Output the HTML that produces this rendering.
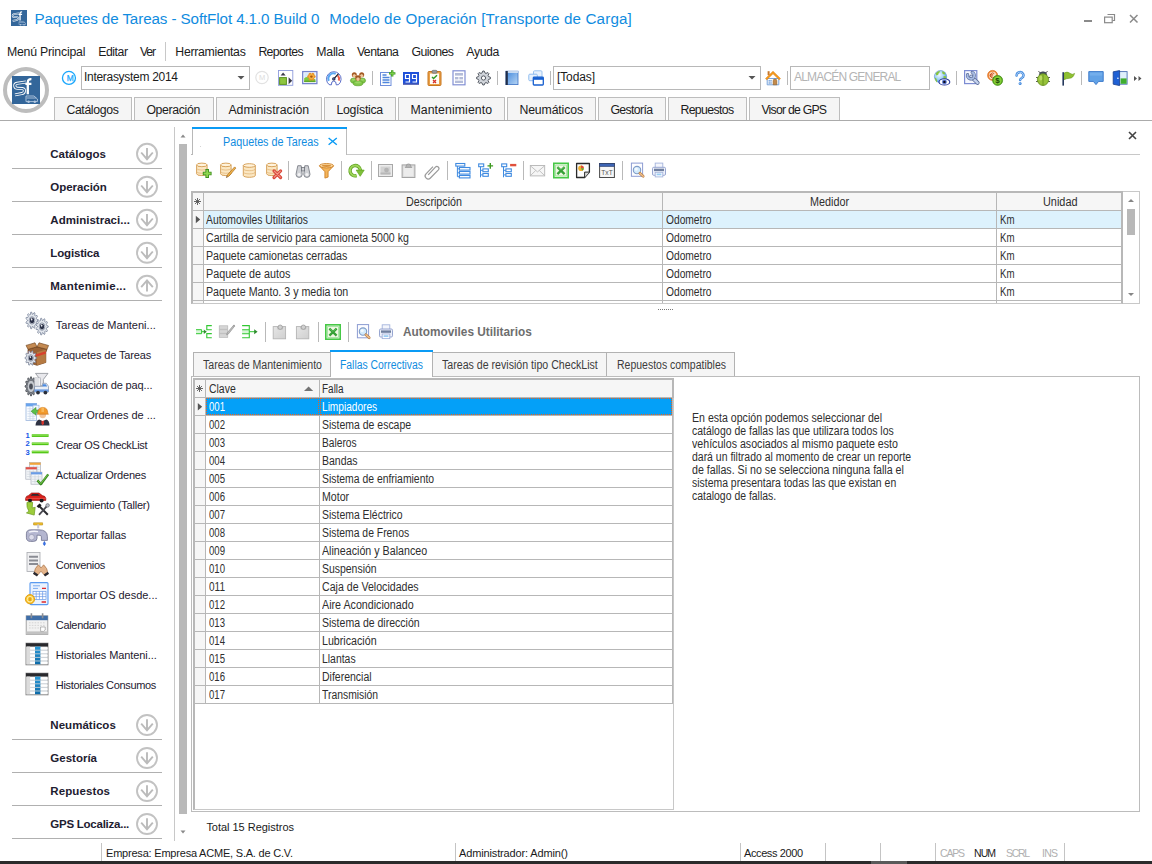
<!DOCTYPE html>
<html><head><meta charset="utf-8"><title>Paquetes de Tareas</title>
<style>
html,body{margin:0;padding:0;}
body{width:1152px;height:864px;position:relative;overflow:hidden;background:#fff;font-family:"Liberation Sans",sans-serif;}
.t{position:absolute;white-space:nowrap;}
.b{position:absolute;box-sizing:border-box;}
svg.b{overflow:visible;}
</style></head><body>
<svg class="b" style="left:11px;top:10px" width="16" height="16" viewBox="0 0 28 28"><rect width="28" height="28" fill="#33669a"/><path d="M14 6L5 7.3Q2.4 7.8 2.8 10.2Q3.1 12.2 5.6 12.3L10.4 12.6Q12.7 13 12.4 15.2Q12.1 17.2 9.8 17.6L3 18.9" fill="none" stroke="#fff" stroke-width="3" stroke-linejoin="round"/><path d="M14 6L5 7.3Q2.4 7.8 2.8 10.2Q3.1 12.2 5.6 12.3L10.4 12.6Q12.7 13 12.4 15.2Q12.1 17.2 9.8 17.6L3 18.9" fill="none" stroke="#33669a" stroke-width="1.3" stroke-linejoin="round"/><path d="M15.8 18.2V6.2Q15.8 3 19.4 3.2M13.4 7.8h6" fill="none" stroke="#fff" stroke-width="2.3"/><g stroke="#b4c8e0" stroke-width="0.9" fill="none"><path d="M14 20h8l3.4 3v2.6H14z"/><path d="M14.6 22h9.6"/></g><circle cx="16.6" cy="25.8" r="1.2" fill="#b4c8e0"/><circle cx="22.8" cy="25.8" r="1.2" fill="#b4c8e0"/></svg>
<div class="t" style="left:34.40px;top:8.23px;font-size:15.20px;line-height:21px;color:#118ce0;letter-spacing:-0.104px;">Paquetes de Tareas - SoftFlot 4.1.0 Build 0</div>
<div class="t" style="left:329.20px;top:8.23px;font-size:15.20px;line-height:21px;color:#118ce0;letter-spacing:0.128px;">Modelo de Operación [Transporte de Carga]</div>
<div class="b" style="left:1084.00px;top:20.00px;width:8.00px;height:2.00px;background:#8a8a8a"></div>
<svg class="b" style="left:1104px;top:14px" width="12" height="10" viewBox="0 0 12 10"><path d="M3.5 0.5h7v6h-2" fill="none" stroke="#8a8a8a" stroke-width="1.2"/><rect x="0.6" y="3.1" width="7.6" height="5.6" fill="#fff" stroke="#8a8a8a" stroke-width="1.2"/></svg>
<svg class="b" style="left:1129px;top:14px" width="10" height="10" viewBox="0 0 10 10"><path d="M1 1L8.5 8.5M8.5 1L1 8.5" stroke="#8a8a8a" stroke-width="1.5" fill="none"/></svg>
<div class="t" style="left:6.90px;top:44.14px;font-size:12.30px;line-height:17px;color:#1c1c1c;letter-spacing:-0.220px;">Menú Principal</div>
<div class="t" style="left:98.30px;top:44.14px;font-size:12.30px;line-height:17px;color:#1c1c1c;letter-spacing:-0.487px;">Editar</div>
<div class="t" style="left:140.00px;top:44.14px;font-size:12.30px;line-height:17px;color:#1c1c1c;letter-spacing:-1.232px;">Ver</div>
<div class="t" style="left:175.30px;top:44.14px;font-size:12.30px;line-height:17px;color:#1c1c1c;letter-spacing:-0.302px;">Herramientas</div>
<div class="t" style="left:258.40px;top:44.14px;font-size:12.30px;line-height:17px;color:#1c1c1c;letter-spacing:-0.673px;">Reportes</div>
<div class="t" style="left:316.30px;top:44.14px;font-size:12.30px;line-height:17px;color:#1c1c1c;letter-spacing:-0.249px;">Malla</div>
<div class="t" style="left:356.90px;top:44.14px;font-size:12.30px;line-height:17px;color:#1c1c1c;letter-spacing:-0.541px;">Ventana</div>
<div class="t" style="left:411.60px;top:44.14px;font-size:12.30px;line-height:17px;color:#1c1c1c;letter-spacing:-0.602px;">Guiones</div>
<div class="t" style="left:466.30px;top:44.14px;font-size:12.30px;line-height:17px;color:#1c1c1c;letter-spacing:-0.389px;">Ayuda</div>
<div class="b" style="left:165.00px;top:42.00px;width:1.00px;height:19.00px;background:#c8c8c8"></div>
<div class="b" style="left:3.00px;top:67.00px;width:46.00px;height:46.00px;border-radius:50%;border:4px solid #bdbdbd;background:#fff"></div>
<svg class="b" style="left:12px;top:76px" width="28" height="28" viewBox="0 0 28 28"><rect width="28" height="28" fill="#33669a"/><path d="M14 6L5 7.3Q2.4 7.8 2.8 10.2Q3.1 12.2 5.6 12.3L10.4 12.6Q12.7 13 12.4 15.2Q12.1 17.2 9.8 17.6L3 18.9" fill="none" stroke="#fff" stroke-width="3" stroke-linejoin="round"/><path d="M14 6L5 7.3Q2.4 7.8 2.8 10.2Q3.1 12.2 5.6 12.3L10.4 12.6Q12.7 13 12.4 15.2Q12.1 17.2 9.8 17.6L3 18.9" fill="none" stroke="#33669a" stroke-width="1.3" stroke-linejoin="round"/><path d="M15.8 18.2V6.2Q15.8 3 19.4 3.2M13.4 7.8h6" fill="none" stroke="#fff" stroke-width="2.3"/><g stroke="#b4c8e0" stroke-width="0.9" fill="none"><path d="M14 20h8l3.4 3v2.6H14z"/><path d="M14.6 22h9.6"/></g><circle cx="16.6" cy="25.8" r="1.2" fill="#b4c8e0"/><circle cx="22.8" cy="25.8" r="1.2" fill="#b4c8e0"/></svg>
<svg class="b" style="left:61px;top:70px" width="16" height="16" viewBox="-0.45 -0.45 16 16"><circle cx="7.5" cy="7.5" r="6.5" fill="#fff" stroke="#1aa6fc" stroke-width="1.3"/><text x="8.7" y="10.5" font-size="8.4" text-anchor="middle" fill="#1aa6fc" stroke="#1aa6fc" stroke-width="0.25" font-family="Liberation Sans">M</text></svg>
<div class="b" style="left:81.00px;top:66.00px;width:169.00px;height:24.00px;border:1px solid #b8b8b8;background:#fff"></div>
<div class="t" style="left:84.00px;top:69.34px;font-size:12.00px;line-height:17px;color:#1c1c1c;letter-spacing:-0.295px;">Interasystem 2014</div>
<svg class="b" style="left:237px;top:76px" width="8" height="4" viewBox="-0.5 0 8 4"><path d="M0 0h7l-3.5 3.6z" fill="#555"/></svg>
<svg class="b" style="left:255px;top:70px" width="14" height="15" viewBox="0 -0.5 14 15"><circle cx="7" cy="7" r="6.2" fill="#fff" stroke="#e2e2e2" stroke-width="1.2"/><text x="7" y="9.8" font-size="7.5" text-anchor="middle" fill="#dcdcdc" font-family="Liberation Sans">M</text></svg>
<div class="b" style="left:372.00px;top:71.00px;width:1.00px;height:14.00px;background:#b9b9b9"></div>
<div class="b" style="left:497.00px;top:71.00px;width:1.00px;height:14.00px;background:#b9b9b9"></div>
<div class="b" style="left:550.00px;top:71.00px;width:1.00px;height:14.00px;background:#b9b9b9"></div>
<div class="b" style="left:787.00px;top:71.00px;width:1.00px;height:14.00px;background:#b9b9b9"></div>
<div class="b" style="left:956.00px;top:71.00px;width:1.00px;height:14.00px;background:#b9b9b9"></div>
<div class="b" style="left:1081.00px;top:71.00px;width:1.00px;height:14.00px;background:#b9b9b9"></div>
<svg class="b" style="left:278px;top:70px" width="16" height="16" viewBox="0 0 16 16"><rect x="0.5" y="0.5" width="14.3" height="14.8" fill="#fff" stroke="#8f9cdc" stroke-width="0.9"/><rect x="1.6" y="7.6" width="6.8" height="6.8" fill="#8dc63f" stroke="#5c9322"/><path d="M2.6 5.6h5L5.1 2.6z" fill="#3a3a4a"/><path d="M10.6 7.2v7l3.6-3.5z" fill="#3a3a4a"/></svg>
<svg class="b" style="left:302px;top:70px" width="16" height="16" viewBox="0 0 16 16"><rect x="0.7" y="1.6" width="14.2" height="12" fill="#fff" stroke="#7684cc" stroke-width="1.3"/><rect x="2.2" y="3.1" width="11.2" height="9" fill="#d6ebfa"/><path d="M2.2 8.2q2.6-2 5-0.6l6.2 1.6v2.9H2.2z" fill="#80ca3c"/><rect x="2.2" y="10.6" width="11.2" height="1.5" fill="#5fa82a"/><circle cx="12.10" cy="6.60" r="1.5" fill="#e8922a"/><circle cx="10.75" cy="8.94" r="1.5" fill="#e8922a"/><circle cx="8.05" cy="8.94" r="1.5" fill="#e8922a"/><circle cx="6.70" cy="6.60" r="1.5" fill="#e8922a"/><circle cx="8.05" cy="4.26" r="1.5" fill="#e8922a"/><circle cx="10.75" cy="4.26" r="1.5" fill="#e8922a"/><circle cx="9.4" cy="6.6" r="2.6" fill="#f4b040"/><circle cx="9.4" cy="6.6" r="1.2" fill="#a8560e"/></svg>
<svg class="b" style="left:326px;top:70px" width="16" height="16" viewBox="0 0 16 16"><path d="M3.1 14.6A7.3 7.3 0 1 1 12.5 14.6L10.3 14.9A2.5 3.9 0 0 0 5.3 14.9Z" fill="#fff" stroke="#4a5ec2" stroke-width="0.9" stroke-linejoin="round"/><path d="M2.8 10.8A5.2 5.2 0 0 1 9.7 3.9" fill="none" stroke="#5aa8f2" stroke-width="2"/><path d="M11.9 5.6A5.2 5.2 0 0 1 12.8 10.6" fill="none" stroke="#f05a48" stroke-width="2"/><path d="M7.8 8.8L12.4 3.8" stroke="#14141e" stroke-width="1.2"/><circle cx="7.8" cy="8.9" r="1.7" fill="#1c2850"/><circle cx="7.8" cy="8.9" r="0.6" fill="#8a9ad0"/></svg>
<svg class="b" style="left:350px;top:70px" width="16" height="16" viewBox="0 0 16 16"><ellipse cx="4" cy="10.6" rx="3.6" ry="2.7" fill="#80c648" stroke="#5a9c2c" stroke-width="0.6"/><ellipse cx="4" cy="9.79" rx="2.16" ry="1.08" fill="#a6dc72" opacity="0.7"/><ellipse cx="12" cy="10.6" rx="3.6" ry="2.7" fill="#80c648" stroke="#5a9c2c" stroke-width="0.6"/><ellipse cx="12" cy="9.79" rx="2.16" ry="1.08" fill="#a6dc72" opacity="0.7"/><circle cx="4.3" cy="4.8" r="2.5" fill="#a85a22"/><ellipse cx="4.3" cy="5.6" rx="1.55" ry="1.8" fill="#f2c79a"/><path d="M2.75 4.55q1.55 -1.5 3.1 0" fill="none" stroke="#7a3c10" stroke-width="0.5"/><circle cx="11.7" cy="4.8" r="2.5" fill="#a85a22"/><ellipse cx="11.7" cy="5.6" rx="1.55" ry="1.8" fill="#f2c79a"/><path d="M10.15 4.55q1.55 -1.5 3.1 0" fill="none" stroke="#7a3c10" stroke-width="0.5"/><ellipse cx="8" cy="13.2" rx="5" ry="2.6" fill="#80c648" stroke="#5a9c2c" stroke-width="0.6"/><ellipse cx="8" cy="12.42" rx="3" ry="1.04" fill="#a6dc72" opacity="0.7"/><circle cx="8" cy="8" r="2.8" fill="#a85a22"/><ellipse cx="8" cy="8.896" rx="1.736" ry="2.016" fill="#f2c79a"/><path d="M6.264 7.72q1.736 -1.68 3.472 0" fill="none" stroke="#7a3c10" stroke-width="0.5"/></svg>
<svg class="b" style="left:380px;top:70px" width="16" height="16" viewBox="0 0 16 16"><rect x="0.5" y="2.5" width="10.5" height="13" fill="#fff" stroke="#6f8fdc"/><path d="M2.5 5h4M2.5 7.5h7M2.5 10h7M2.5 12.5h7" stroke="#4f86dc" stroke-width="1.4"/><path d="M12.2 0.2v6.4M9 3.4h6.4" stroke="#3f9a22" stroke-width="2.4"/><path d="M12.2 0.9v5M9.7 3.4h5" stroke="#7fd04a" stroke-width="1"/></svg>
<svg class="b" style="left:403px;top:70px" width="16" height="16" viewBox="0 0 16 16"><rect x="0" y="2" width="16" height="12.6" fill="#1f50d9"/><rect x="0" y="13.6" width="16" height="1" fill="#5a5a9a"/><path d="M2.5 4.5h4v4h-4zM6.5 8.5v3.5h-4M9.5 4.5h4v4h-4zM13.5 8.5v3.5h-4" fill="none" stroke="#fff" stroke-width="1.2"/></svg>
<svg class="b" style="left:427px;top:70px" width="16" height="16" viewBox="0 0 16 16"><rect x="1" y="1.5" width="13" height="14" rx="1" fill="#e9a048" stroke="#c8761e"/><rect x="3" y="3.5" width="9" height="10.5" fill="#fffdf6"/><rect x="5" y="0.3" width="5" height="3" rx="1" fill="#9a9a9a" stroke="#666" stroke-width="0.6"/><path d="M5 7l1.6 1.6L10 5.2" stroke="#2f9a22" stroke-width="1.4" fill="none"/><path d="M6 10l3 3M9 10l-3 3" stroke="#d8332a" stroke-width="1.3"/></svg>
<svg class="b" style="left:451px;top:70px" width="16" height="16" viewBox="0 0 16 16"><rect x="2" y="0.8" width="12" height="14" fill="#fff" stroke="#8290d4" stroke-width="1.2"/><rect x="4" y="3" width="8" height="2.6" fill="#b4bcd8"/><rect x="4" y="7" width="3.4" height="2.4" fill="#b4bcd8"/><rect x="8.4" y="7" width="3.6" height="2.4" fill="#b4bcd8"/><rect x="4" y="10.6" width="8" height="2.4" fill="#b4bcd8"/></svg>
<svg class="b" style="left:475px;top:70px" width="17" height="16" viewBox="-0.5 0 17 16"><path d="M14.97 7.31L14.97 8.69L12.98 9.51L12.59 10.45L13.41 12.44L12.44 13.41L10.45 12.59L9.51 12.98L8.69 14.97L7.31 14.97L6.49 12.98L5.55 12.59L3.56 13.41L2.59 12.44L3.41 10.45L3.02 9.51L1.03 8.69L1.03 7.31L3.02 6.49L3.41 5.55L2.59 3.56L3.56 2.59L5.55 3.41L6.49 3.02L7.31 1.03L8.69 1.03L9.51 3.02L10.45 3.41L12.44 2.59L13.41 3.56L12.59 5.55L12.98 6.49Z" fill="#d0d4da" stroke="#565b64" stroke-width="1" stroke-linejoin="round"/><circle cx="8" cy="8" r="2.1" fill="#fff" stroke="#565b64" stroke-width="1"/></svg>
<svg class="b" style="left:504px;top:70px" width="16" height="16" viewBox="0 0 16 16"><defs><linearGradient id="bk" x1="0" y1="0" x2="1" y2="1"><stop offset="0" stop-color="#3f86dc"/><stop offset="1" stop-color="#b9d6f4"/></linearGradient></defs><rect x="2" y="1.2" width="12" height="13.4" fill="url(#bk)" stroke="#3a70c4" stroke-width="0.8"/><rect x="2" y="1.2" width="12" height="1.6" fill="#dfe9f6"/><rect x="1.6" y="1" width="2.2" height="14" fill="#1f2c48"/></svg>
<svg class="b" style="left:528px;top:70px" width="16" height="16" viewBox="0 0 16 16"><rect x="5.5" y="0.8" width="8.5" height="6.5" rx="1" fill="#e8f2fd" stroke="#9cc4f0"/><rect x="0.8" y="4.2" width="8.5" height="6.5" rx="1" fill="#e8f2fd" stroke="#8fbcf0"/><rect x="5.3" y="7.2" width="10" height="7.8" rx="0.8" fill="#fff" stroke="#1860d0" stroke-width="1.3"/><rect x="5.3" y="7.2" width="10" height="2.6" fill="#1860d0"/></svg>
<svg class="b" style="left:765px;top:70px" width="16" height="16" viewBox="0 0 16 16"><rect x="2.6" y="1.2" width="2" height="4" fill="#c8782a"/><path d="M2.2 8.5h11.6v6.3H2.2z" fill="#fdfdfd" stroke="#6a9ad8" stroke-width="0.9"/><path d="M0.5 8.6L8 1.2l7.5 7.4-1.3 1.2L8 3.8 1.8 9.8z" fill="#f59a1e" stroke="#d87808" stroke-width="0.5"/><path d="M8.2 14.8v-4a1.8 1.8 0 0 1 3.6 0v4z" fill="#c48a4a" stroke="#8a5a22" stroke-width="0.6"/><rect x="3.6" y="10" width="1.2" height="1.6" fill="#6a9ad8"/><rect x="5.4" y="10" width="1.2" height="1.6" fill="#6a9ad8"/><rect x="3.6" y="12.2" width="1.2" height="1.6" fill="#6a9ad8"/><rect x="5.4" y="12.2" width="1.2" height="1.6" fill="#6a9ad8"/></svg>
<svg class="b" style="left:934px;top:70px" width="16" height="16" viewBox="0 0 16 16"><defs><radialGradient id="gl" cx="0.4" cy="0.35" r="0.7"><stop offset="0" stop-color="#f2faff"/><stop offset="0.55" stop-color="#9fd0f6"/><stop offset="1" stop-color="#3f8fe0"/></radialGradient></defs><circle cx="6.5" cy="6.6" r="6.1" fill="url(#gl)" stroke="#5a8ac8" stroke-width="0.6"/><path d="M1.6 3.4q1.4-1.8 3.4-2.4l1.4 0.8-1.6 1.2-0.6 1.8-1.8 0.8zM8 1.2l2.6 1 0.8 2-1.6 0.4-1.4-1.2zM0.8 7.6l1.4 0.6 1 2.6-0.6 1.6q-1.6-1.6-1.8-4.8zM9.6 6l2.4 0.2 0.4 2-1.6 1.6-1.4-1.6z" fill="#86c440"/><ellipse cx="10.4" cy="11.9" rx="5.4" ry="3.1" fill="#fff" stroke="#2a3a9c" stroke-width="1.1"/><circle cx="10.4" cy="11.9" r="2.4" fill="#5a78d0"/><circle cx="10.4" cy="11.9" r="1.2" fill="#08081c"/></svg>
<svg class="b" style="left:964px;top:70px" width="16" height="16" viewBox="0 0 16 16"><rect x="0.6" y="0.6" width="12.2" height="13" fill="#f6f8ff" stroke="#7c8cd2" stroke-width="1.2"/><path d="M7.2 6.6l6.4 6.2" stroke="#5a6c98" stroke-width="4" stroke-linecap="round"/><path d="M7.2 6.6l6.4 6.2" stroke="#c4d2ee" stroke-width="2.4" stroke-linecap="round"/><path d="M8.2 2.4a3.4 3.4 0 1 1-4.6 2.2" fill="none" stroke="#5a6c98" stroke-width="3.2" stroke-linecap="round"/><path d="M8.2 2.4a3.4 3.4 0 1 1-4.6 2.2" fill="none" stroke="#a8bce4" stroke-width="1.8" stroke-linecap="round"/></svg>
<svg class="b" style="left:987px;top:70px" width="16" height="16" viewBox="0 0 16 16"><circle cx="5.6" cy="5.4" r="5" fill="#f08a3c" stroke="#d86a1c" stroke-width="0.7"/><circle cx="5.6" cy="5.4" r="3.6" fill="#fde2c4"/><path d="M7.2 3.6a2.4 2.4 0 1 0 0 3.6M2.8 4.8h3.4M2.8 6h3" fill="none" stroke="#c8481a" stroke-width="0.9"/><circle cx="10.6" cy="10.4" r="5" fill="#5aa81e" stroke="#3f8a12" stroke-width="0.7"/><circle cx="10.6" cy="10.4" r="3.9" fill="#86d038"/><text x="10.6" y="13.3" font-size="8" font-weight="bold" text-anchor="middle" fill="#1c4808" font-family="Liberation Sans">$</text></svg>
<svg class="b" style="left:1012px;top:70px" width="16" height="16" viewBox="0 0 16 16"><path d="M4.6 5.4a3.4 3.2 0 1 1 5.2 2.6q-1.7 1-1.7 1.9" fill="none" stroke="#3f86dc" stroke-width="2.5" stroke-linecap="round"/><path d="M4.6 5.4a3.4 3.2 0 1 1 5.2 2.6q-1.7 1-1.7 1.9" fill="none" stroke="#bcdcfa" stroke-width="0.9" stroke-linecap="round"/><circle cx="8.1" cy="13.5" r="1.5" fill="#3f86dc"/><circle cx="7.9" cy="13.2" r="0.6" fill="#cfe6fb"/></svg>
<svg class="b" style="left:1035px;top:70px" width="16" height="16" viewBox="0 0 16 16"><path d="M3.4 1l2.2 2.4M12.6 1l-2.2 2.4M1 7.5h2M15 7.5h-2M1 11.5h2M15 11.5h-2" stroke="#333" stroke-width="0.8"/><ellipse cx="8" cy="4.6" rx="3.6" ry="2.8" fill="#4a5466" stroke="#2a303c" stroke-width="0.6"/><ellipse cx="8" cy="9.6" rx="5.6" ry="5.9" fill="#97c23a" stroke="#5f8a1a" stroke-width="0.8"/><path d="M8 4.4v11" stroke="#5f8a1a" stroke-width="0.8"/><ellipse cx="5.8" cy="8" rx="1.5" ry="2.6" fill="#c4e070" opacity="0.8"/></svg>
<svg class="b" style="left:1060px;top:70px" width="16" height="16" viewBox="0 0 16 16"><path d="M3.8 3.2q3.4-2.2 6 0t4.8 0.2q-1.4 4.6-4.8 4.8t-6 1.6z" fill="#8fc032" stroke="#6a9a1c" stroke-width="0.6"/><rect x="2.4" y="2.2" width="1.6" height="13.4" fill="#24385c"/></svg>
<svg class="b" style="left:1088px;top:70px" width="16" height="16" viewBox="0 0 16 16"><path d="M0.8 1.6h14.4v9.8H10.6L8 14.6 5.4 11.4H0.8z" fill="#62a2e6" stroke="#3f7ccc" stroke-width="1"/><path d="M1.8 2.6h12.4v3H1.8z" fill="#7ab4ee" opacity="0.7"/></svg>
<svg class="b" style="left:1112px;top:70px" width="16" height="16" viewBox="0 0 16 16"><rect x="5.5" y="1.6" width="9.6" height="12.6" fill="#dff0fb" stroke="#4a70b4" stroke-width="0.9"/><rect x="8.6" y="8.4" width="6" height="5.4" fill="#3fae2e"/><path d="M1.2 1.8L7.6 0.6v15L1.2 14.2z" fill="#1f60d4" stroke="#183c8c" stroke-width="0.8"/><circle cx="5.9" cy="8.2" r="0.8" fill="#fff"/></svg>
<div class="b" style="left:553.00px;top:66.00px;width:208.00px;height:24.00px;border:1px solid #b8b8b8;background:#fff"></div>
<div class="t" style="left:557.00px;top:69.34px;font-size:12.00px;line-height:17px;color:#1c1c1c;letter-spacing:-0.115px;">[Todas]</div>
<svg class="b" style="left:748px;top:76px" width="8" height="4" viewBox="-0.5 0 8 4"><path d="M0 0h7l-3.5 3.6z" fill="#555"/></svg>
<div class="b" style="left:790.00px;top:66.00px;width:140.00px;height:24.00px;border:1px solid #b8b8b8;background:#fff"></div>
<div class="t" style="left:794.00px;top:69.34px;font-size:12.00px;line-height:17px;color:#b4b4b4;letter-spacing:-0.815px;">ALMACÉN GENERAL</div>
<svg class="b" style="left:1134px;top:76px" width="8" height="5" viewBox="0 0 8 5"><path d="M0 0l3 2.5l-3 2.5zM4.5 0l3 2.5l-3 2.5z" fill="#555"/></svg>
<div class="b" style="left:0.00px;top:120.00px;width:1152.00px;height:1.00px;background:#ababab"></div>
<div class="b" style="left:54.00px;top:97.00px;width:78.00px;height:24.00px;background:#f5f5f5;border:1px solid #bdbdbd;border-bottom:none"></div>
<div class="t" style="left:66.40px;top:101.94px;font-size:12.30px;line-height:17px;color:#1c1c1c;letter-spacing:-0.373px;">Catálogos</div>
<div class="b" style="left:134.00px;top:97.00px;width:80.00px;height:24.00px;background:#f5f5f5;border:1px solid #bdbdbd;border-bottom:none"></div>
<div class="t" style="left:146.40px;top:101.94px;font-size:12.30px;line-height:17px;color:#1c1c1c;letter-spacing:-0.356px;">Operación</div>
<div class="b" style="left:216.00px;top:97.00px;width:106.00px;height:24.00px;background:#f5f5f5;border:1px solid #bdbdbd;border-bottom:none"></div>
<div class="t" style="left:228.40px;top:101.94px;font-size:12.30px;line-height:17px;color:#1c1c1c;letter-spacing:0.002px;">Administración</div>
<div class="b" style="left:324.00px;top:97.00px;width:72.00px;height:24.00px;background:#f5f5f5;border:1px solid #bdbdbd;border-bottom:none"></div>
<div class="t" style="left:336.40px;top:101.94px;font-size:12.30px;line-height:17px;color:#1c1c1c;letter-spacing:-0.316px;">Logística</div>
<div class="b" style="left:398.00px;top:97.00px;width:107.00px;height:24.00px;background:#f5f5f5;border:1px solid #bdbdbd;border-bottom:none"></div>
<div class="t" style="left:410.40px;top:101.94px;font-size:12.30px;line-height:17px;color:#1c1c1c;letter-spacing:0.085px;">Mantenimiento</div>
<div class="b" style="left:507.00px;top:97.00px;width:89.00px;height:24.00px;background:#f5f5f5;border:1px solid #bdbdbd;border-bottom:none"></div>
<div class="t" style="left:519.40px;top:101.94px;font-size:12.30px;line-height:17px;color:#1c1c1c;letter-spacing:-0.138px;">Neumáticos</div>
<div class="b" style="left:598.00px;top:97.00px;width:68.00px;height:24.00px;background:#f5f5f5;border:1px solid #bdbdbd;border-bottom:none"></div>
<div class="t" style="left:610.40px;top:101.94px;font-size:12.30px;line-height:17px;color:#1c1c1c;letter-spacing:-0.639px;">Gestoría</div>
<div class="b" style="left:668.00px;top:97.00px;width:79.00px;height:24.00px;background:#f5f5f5;border:1px solid #bdbdbd;border-bottom:none"></div>
<div class="t" style="left:680.40px;top:101.94px;font-size:12.30px;line-height:17px;color:#1c1c1c;letter-spacing:-0.638px;">Repuestos</div>
<div class="b" style="left:749.00px;top:97.00px;width:91.00px;height:24.00px;background:#f5f5f5;border:1px solid #bdbdbd;border-bottom:none"></div>
<div class="t" style="left:761.40px;top:101.94px;font-size:12.30px;line-height:17px;color:#1c1c1c;letter-spacing:-0.781px;">Visor de GPS</div>
<div class="b" style="left:0.00px;top:120.00px;width:1152.00px;height:1.00px;background:#ababab"></div>
<div class="t" style="left:50.30px;top:146.02px;font-size:11.50px;line-height:16px;color:#1e2030;letter-spacing:0.001px;font-weight:bold;">Catálogos</div>
<svg class="b" style="left:136px;top:142px" width="22" height="23" viewBox="0 -0.8 22 23"><circle cx="11" cy="11" r="10" fill="#fff" stroke="#c2c2c2" stroke-width="1.9"/><path d="M11 5.3v10.4M5.2 9.7L11 16.4l5.8-6.7" fill="none" stroke="#bbbbbb" stroke-width="1.9"/></svg>
<div class="b" style="left:12.00px;top:168.00px;width:150.00px;height:1.00px;background:#b0b0b0"></div>
<div class="t" style="left:50.30px;top:179.02px;font-size:11.50px;line-height:16px;color:#1e2030;letter-spacing:-0.047px;font-weight:bold;">Operación</div>
<svg class="b" style="left:136px;top:175px" width="22" height="23" viewBox="0 -0.8 22 23"><circle cx="11" cy="11" r="10" fill="#fff" stroke="#c2c2c2" stroke-width="1.9"/><path d="M11 5.3v10.4M5.2 9.7L11 16.4l5.8-6.7" fill="none" stroke="#bbbbbb" stroke-width="1.9"/></svg>
<div class="b" style="left:12.00px;top:201.00px;width:150.00px;height:1.00px;background:#b0b0b0"></div>
<div class="t" style="left:50.30px;top:212.02px;font-size:11.50px;line-height:16px;color:#1e2030;letter-spacing:0.026px;font-weight:bold;">Administraci...</div>
<svg class="b" style="left:136px;top:208px" width="22" height="23" viewBox="0 -0.8 22 23"><circle cx="11" cy="11" r="10" fill="#fff" stroke="#c2c2c2" stroke-width="1.9"/><path d="M11 5.3v10.4M5.2 9.7L11 16.4l5.8-6.7" fill="none" stroke="#bbbbbb" stroke-width="1.9"/></svg>
<div class="b" style="left:12.00px;top:234.00px;width:150.00px;height:1.00px;background:#b0b0b0"></div>
<div class="t" style="left:50.30px;top:245.02px;font-size:11.50px;line-height:16px;color:#1e2030;letter-spacing:-0.160px;font-weight:bold;">Logistica</div>
<svg class="b" style="left:136px;top:241px" width="22" height="23" viewBox="0 -0.8 22 23"><circle cx="11" cy="11" r="10" fill="#fff" stroke="#c2c2c2" stroke-width="1.9"/><path d="M11 5.3v10.4M5.2 9.7L11 16.4l5.8-6.7" fill="none" stroke="#bbbbbb" stroke-width="1.9"/></svg>
<div class="b" style="left:12.00px;top:267.00px;width:150.00px;height:1.00px;background:#b0b0b0"></div>
<div class="t" style="left:50.30px;top:278.02px;font-size:11.50px;line-height:16px;color:#1e2030;letter-spacing:0.238px;font-weight:bold;">Mantenimie...</div>
<svg class="b" style="left:136px;top:274px" width="22" height="23" viewBox="0 -0.8 22 23"><circle cx="11" cy="11" r="10" fill="#fff" stroke="#c2c2c2" stroke-width="1.9"/><path d="M11 16.7V6.3M5.2 12.3L11 5.6l5.8 6.7" fill="none" stroke="#bbbbbb" stroke-width="1.9"/></svg>
<div class="b" style="left:12.00px;top:300.00px;width:150.00px;height:1.00px;background:#b0b0b0"></div>
<div class="t" style="left:50.30px;top:717.22px;font-size:11.50px;line-height:16px;color:#1e2030;letter-spacing:0.035px;font-weight:bold;">Neumáticos</div>
<svg class="b" style="left:136px;top:714px" width="22" height="22" viewBox="0 0 22 22"><circle cx="11" cy="11" r="10" fill="#fff" stroke="#c2c2c2" stroke-width="1.9"/><path d="M11 5.3v10.4M5.2 9.7L11 16.4l5.8-6.7" fill="none" stroke="#bbbbbb" stroke-width="1.9"/></svg>
<div class="b" style="left:12.00px;top:739.00px;width:150.00px;height:1.00px;background:#b0b0b0"></div>
<div class="t" style="left:50.30px;top:750.22px;font-size:11.50px;line-height:16px;color:#1e2030;letter-spacing:0.006px;font-weight:bold;">Gestoría</div>
<svg class="b" style="left:136px;top:747px" width="22" height="22" viewBox="0 0 22 22"><circle cx="11" cy="11" r="10" fill="#fff" stroke="#c2c2c2" stroke-width="1.9"/><path d="M11 5.3v10.4M5.2 9.7L11 16.4l5.8-6.7" fill="none" stroke="#bbbbbb" stroke-width="1.9"/></svg>
<div class="b" style="left:12.00px;top:772.00px;width:150.00px;height:1.00px;background:#b0b0b0"></div>
<div class="t" style="left:50.30px;top:783.22px;font-size:11.50px;line-height:16px;color:#1e2030;letter-spacing:0.113px;font-weight:bold;">Repuestos</div>
<svg class="b" style="left:136px;top:780px" width="22" height="22" viewBox="0 0 22 22"><circle cx="11" cy="11" r="10" fill="#fff" stroke="#c2c2c2" stroke-width="1.9"/><path d="M11 5.3v10.4M5.2 9.7L11 16.4l5.8-6.7" fill="none" stroke="#bbbbbb" stroke-width="1.9"/></svg>
<div class="b" style="left:12.00px;top:805.00px;width:150.00px;height:1.00px;background:#b0b0b0"></div>
<div class="t" style="left:50.30px;top:816.22px;font-size:11.50px;line-height:16px;color:#1e2030;letter-spacing:-0.246px;font-weight:bold;">GPS Localiza...</div>
<svg class="b" style="left:136px;top:813px" width="22" height="22" viewBox="0 0 22 22"><circle cx="11" cy="11" r="10" fill="#fff" stroke="#c2c2c2" stroke-width="1.9"/><path d="M11 5.3v10.4M5.2 9.7L11 16.4l5.8-6.7" fill="none" stroke="#bbbbbb" stroke-width="1.9"/></svg>
<div class="b" style="left:12.00px;top:838.00px;width:150.00px;height:1.00px;background:#b0b0b0"></div>
<svg class="b" style="left:25px;top:311px" width="24" height="25" viewBox="0 -0.8 24 25"><g transform="translate(7,8.6) scale(0.74,1)"><path d="M8.38 -0.60L8.38 0.60L6.07 1.32L5.82 2.17L7.37 4.03L6.72 5.03L4.40 4.40L3.73 4.98L4.03 7.37L2.94 7.87L1.32 6.07L0.44 6.20L-0.60 8.38L-1.79 8.21L-2.17 5.82L-2.98 5.46L-5.03 6.72L-5.94 5.94L-4.98 3.73L-5.46 2.98L-7.87 2.94L-8.21 1.79L-6.20 0.44L-6.20 -0.44L-8.21 -1.79L-7.87 -2.94L-5.46 -2.98L-4.98 -3.73L-5.94 -5.94L-5.03 -6.72L-2.98 -5.46L-2.17 -5.82L-1.79 -8.21L-0.60 -8.38L0.44 -6.20L1.32 -6.07L2.94 -7.87L4.03 -7.37L3.73 -4.98L4.40 -4.40L6.72 -5.03L7.37 -4.03L5.82 -2.17L6.07 -1.32Z" fill="#e2e6ec" stroke="#6c7890" stroke-width="0.8" stroke-linejoin="round"/><circle cx="0" cy="0" r="3.78" fill="#fff" stroke="#6c7890" stroke-width="0.8"/><circle cx="0" cy="0" r="2.856" fill="#2c3248"/><circle cx="-0.504" cy="-1.008" r="1.092" fill="#eef0f4"/></g><g transform="translate(17,14.8) scale(0.74,1)"><path d="M8.38 -0.60L8.38 0.60L6.07 1.32L5.82 2.17L7.37 4.03L6.72 5.03L4.40 4.40L3.73 4.98L4.03 7.37L2.94 7.87L1.32 6.07L0.44 6.20L-0.60 8.38L-1.79 8.21L-2.17 5.82L-2.98 5.46L-5.03 6.72L-5.94 5.94L-4.98 3.73L-5.46 2.98L-7.87 2.94L-8.21 1.79L-6.20 0.44L-6.20 -0.44L-8.21 -1.79L-7.87 -2.94L-5.46 -2.98L-4.98 -3.73L-5.94 -5.94L-5.03 -6.72L-2.98 -5.46L-2.17 -5.82L-1.79 -8.21L-0.60 -8.38L0.44 -6.20L1.32 -6.07L2.94 -7.87L4.03 -7.37L3.73 -4.98L4.40 -4.40L6.72 -5.03L7.37 -4.03L5.82 -2.17L6.07 -1.32Z" fill="#e2e6ec" stroke="#6c7890" stroke-width="0.8" stroke-linejoin="round"/><circle cx="0" cy="0" r="3.78" fill="#fff" stroke="#6c7890" stroke-width="0.8"/><circle cx="0" cy="0" r="2.856" fill="#2c3248"/><circle cx="-0.504" cy="-1.008" r="1.092" fill="#eef0f4"/></g></svg>
<div class="t" style="left:55.80px;top:317.69px;font-size:11.00px;line-height:15px;color:#1e2030;letter-spacing:0.017px;">Tareas de Manteni...</div>
<svg class="b" style="left:25px;top:341px" width="24" height="25" viewBox="0 -0.8 24 25"><path d="M3 7.5l9-2.5 10 2.5-1.2 3.2v10L12 23.5 3 20.5z" fill="#9a6234" stroke="#6a3e1a" stroke-width="0.7"/><path d="M12 10.5l8.8-2.8v13L12 23.5z" fill="#b57a42"/><path d="M3 7.5L1 3.6l9-2.6 2 4zM22 7.5l1.6-3.8L14 1l-2 4z" fill="#c48a52" stroke="#6a3e1a" stroke-width="0.6"/><path d="M3 9.2l9 3 8.8-2.8v2.6L12 14.8l-9-3z" fill="#d8402c"/><g transform="translate(5.8,16.2) scale(0.78,1)"><path d="M7.38 -0.58L7.38 0.58L5.32 1.28L5.06 2.10L6.31 3.87L5.63 4.81L3.56 4.16L2.86 4.67L2.83 6.84L1.73 7.20L0.43 5.46L-0.43 5.46L-1.73 7.20L-2.83 6.84L-2.86 4.67L-3.56 4.16L-5.63 4.81L-6.31 3.87L-5.06 2.10L-5.32 1.28L-7.38 0.58L-7.38 -0.58L-5.32 -1.28L-5.06 -2.10L-6.31 -3.87L-5.63 -4.81L-3.56 -4.16L-2.86 -4.67L-2.83 -6.84L-1.73 -7.20L-0.43 -5.46L0.43 -5.46L1.73 -7.20L2.83 -6.84L2.86 -4.67L3.56 -4.16L5.63 -4.81L6.31 -3.87L5.06 -2.10L5.32 -1.28Z" fill="#e2e6ec" stroke="#6c7890" stroke-width="0.8" stroke-linejoin="round"/><circle cx="0" cy="0" r="3.33" fill="#fff" stroke="#6c7890" stroke-width="0.8"/><circle cx="0" cy="0" r="2.516" fill="#2c3248"/><circle cx="-0.444" cy="-0.888" r="0.962" fill="#eef0f4"/></g></svg>
<div class="t" style="left:55.80px;top:347.69px;font-size:11.00px;line-height:15px;color:#1e2030;letter-spacing:-0.126px;">Paquetes de Tareas</div>
<svg class="b" style="left:25px;top:371px" width="24" height="25" viewBox="0 -0.8 24 25"><g transform="translate(6,14.6) scale(0.62,1)"><path d="M9.58 -0.63L9.58 0.63L7.26 1.44L7.01 2.38L8.61 4.25L7.98 5.33L5.56 4.88L4.88 5.56L5.33 7.98L4.25 8.61L2.38 7.01L1.44 7.26L0.63 9.58L-0.63 9.58L-1.44 7.26L-2.38 7.01L-4.25 8.61L-5.33 7.98L-4.88 5.56L-5.56 4.88L-7.98 5.33L-8.61 4.25L-7.01 2.38L-7.26 1.44L-9.58 0.63L-9.58 -0.63L-7.26 -1.44L-7.01 -2.38L-8.61 -4.25L-7.98 -5.33L-5.56 -4.88L-4.88 -5.56L-5.33 -7.98L-4.25 -8.61L-2.38 -7.01L-1.44 -7.26L-0.63 -9.58L0.63 -9.58L1.44 -7.26L2.38 -7.01L4.25 -8.61L5.33 -7.98L4.88 -5.56L5.56 -4.88L7.98 -5.33L8.61 -4.25L7.01 -2.38L7.26 -1.44Z" fill="#8a9098" stroke="#2e3238" stroke-width="0.8" stroke-linejoin="round"/><circle cx="0" cy="0" r="3.4" fill="#fff" stroke="#2e3238" stroke-width="0.8"/><circle cx="0" cy="0" r="6.2" fill="#c4c8ce" stroke="#4a4e56" stroke-width="0.8"/><circle cx="0" cy="0" r="3" fill="#4a4e58"/></g><path d="M10.5 1.6h12.5l-4.6 6v6.4h-3.3V7.6z" fill="#e8e8ec" stroke="#8a8e96" stroke-width="0.8"/><path d="M9.5 6h6v9h-6z" fill="#f2f2f4" stroke="#a4a8b0" stroke-width="0.6"/><path d="M11 7v7M13 7v7" stroke="#c0c4ca" stroke-width="0.7"/><path d="M9.5 14.5h8.2v-3h3.6l2.2 3v5.6H9.5z" fill="#e9eef6" stroke="#7a8aa4" stroke-width="0.7"/><path d="M17.7 12.4h3l1.6 2.2h-4.6z" fill="#4a8ae0"/><path d="M9.5 17.6h14v2.5h-14z" fill="#6a9ae0"/><circle cx="13" cy="20.8" r="1.9" fill="#2a2e38"/><circle cx="20.4" cy="20.8" r="1.9" fill="#2a2e38"/></svg>
<div class="t" style="left:55.80px;top:377.69px;font-size:11.00px;line-height:15px;color:#1e2030;letter-spacing:-0.125px;">Asociación de paq...</div>
<svg class="b" style="left:25px;top:401px" width="24" height="25" viewBox="0 -0.8 24 25"><rect x="1" y="1.6" width="10.6" height="17" fill="#fbfdff" stroke="#9ab4dc" stroke-width="0.8"/><rect x="1" y="1.6" width="10.6" height="3" fill="#6aa4ec"/><path d="M2.4 7h8M2.4 9.5h8M2.4 12h8M2.4 14.5h8M2.4 17h8M5 5v13.4M8 5v13.4" stroke="#c4d2e6" stroke-width="0.7"/><rect x="8" y="3.4" width="6" height="8" fill="#eef6ff" stroke="#9ab4dc" stroke-width="0.7"/><path d="M14.6 8.2v2.6H11v2.6l-5-3.9 5-3.9v2.6z" fill="#5cc04a" stroke="#3a8a2a" stroke-width="0.5"/><path d="M10.5 23.6q0.4-5 3.6-6l3.6 1.6 3.6-1.6q3.2 1 3.2 6z" fill="#2e3242"/><path d="M16.6 18l1.1 0.6 1.1-0.6 0.2 4-1.3 1.4-1.3-1.4z" fill="#d8342c"/><path d="M15.2 17.6l2.5 1.6 2.5-1.6-0.6-1.4h-3.8z" fill="#fff"/><ellipse cx="17.7" cy="12.6" rx="3.4" ry="3.8" fill="#f2c49a"/><path d="M12.8 11.6q0-6 5-6t5 6l0.8 0.8H12z" fill="#f29a2c" stroke="#c8701a" stroke-width="0.6"/><path d="M16.4 5.6h2.6v4.6h-2.6z" fill="#f8b85a"/></svg>
<div class="t" style="left:55.80px;top:407.69px;font-size:11.00px;line-height:15px;color:#1e2030;letter-spacing:-0.014px;">Crear Ordenes de ...</div>
<svg class="b" style="left:25px;top:431px" width="24" height="25" viewBox="0 -0.8 24 25"><text x="2.6" y="6.5" font-size="7.6" font-weight="bold" text-anchor="middle" fill="#1458e6" font-family="Liberation Sans">1</text><path d="M6.8 3.8H23.6" stroke="#4fc414" stroke-width="2.7"/><path d="M6.8 3.4H23.6" stroke="#a4ec6a" stroke-width="0.8"/><text x="2.6" y="14.7" font-size="7.6" font-weight="bold" text-anchor="middle" fill="#1458e6" font-family="Liberation Sans">2</text><path d="M6.8 12H23.6" stroke="#4fc414" stroke-width="2.7"/><path d="M6.8 11.6H23.6" stroke="#a4ec6a" stroke-width="0.8"/><text x="2.6" y="22.9" font-size="7.6" font-weight="bold" text-anchor="middle" fill="#1458e6" font-family="Liberation Sans">3</text><path d="M6.8 20.2H23.6" stroke="#4fc414" stroke-width="2.7"/><path d="M6.8 19.8H23.6" stroke="#a4ec6a" stroke-width="0.8"/></svg>
<div class="t" style="left:55.80px;top:437.69px;font-size:11.00px;line-height:15px;color:#1e2030;letter-spacing:-0.359px;">Crear OS CheckList</div>
<svg class="b" style="left:25px;top:461px" width="24" height="25" viewBox="0 -0.8 24 25"><rect x="4.6" y="0.8" width="11" height="12" fill="#f4f6f8" stroke="#aab0ba" stroke-width="0.7"/><rect x="4.6" y="0.8" width="11" height="2.2" fill="#f2a43a"/><path d="M5.6 5.4h9M5.6 7.8h9M5.6 10.2h9M8.6 3.8v8M12 3.8v8" stroke="#c8ced6" stroke-width="0.6"/><rect x="0.8" y="5.4" width="11" height="12" fill="#f4f6f8" stroke="#aab0ba" stroke-width="0.7"/><rect x="0.8" y="5.4" width="11" height="2.2" fill="#e05048"/><path d="M1.8 10h9M1.8 12.4h9M1.8 14.8h9M4.8 8.4v8M8.2 8.4v8" stroke="#c8ced6" stroke-width="0.6"/><rect x="6" y="10.4" width="11" height="12" fill="#f4f6f8" stroke="#aab0ba" stroke-width="0.7"/><rect x="6" y="10.4" width="11" height="2.2" fill="#6a9ce6"/><path d="M7 15h9M7 17.4h9M7 19.8h9M10 13.4v8M13.4 13.4v8" stroke="#c8ced6" stroke-width="0.6"/><path d="M12.4 18.6l3.4 3.8 7.4-9.8" fill="none" stroke="#3a8a22" stroke-width="2.4" stroke-linejoin="round"/><path d="M12.6 18.8l3.2 3 7-9" fill="none" stroke="#7cc84a" stroke-width="0.9"/></svg>
<div class="t" style="left:55.80px;top:467.69px;font-size:11.00px;line-height:15px;color:#1e2030;letter-spacing:-0.179px;">Actualizar Ordenes</div>
<svg class="b" style="left:25px;top:491px" width="24" height="25" viewBox="0 -0.8 24 25"><path d="M0.6 6.4q0.4-2.4 3-2.8l3-2.4h7.4l3.4 2.6q3 0.4 3.4 2.6v2.2H0.6z" fill="#d8201a" stroke="#8a0c0a" stroke-width="0.6"/><path d="M5.4 4l2-1.8h5.4l2.2 1.8z" fill="#2a2a32"/><circle cx="5" cy="8.6" r="2" fill="#1a1a1e"/><circle cx="16.6" cy="8.6" r="2" fill="#1a1a1e"/><path d="M0.6 6.6h20" stroke="#f2605a" stroke-width="0.7"/><path d="M2 10.5h5.6l-0.4 5.6 3-0.6-1 7.8-7.8-2.2 2.6-1.6q-2.8-3.8-2-9z" fill="#9ccc3c" stroke="#6a9a1c" stroke-width="0.7"/><path d="M13.4 13.4l9.4 9.6" stroke="#2a2a2e" stroke-width="2"/><path d="M22.8 13.4L14 23" stroke="#4a4a52" stroke-width="1.8"/><path d="M11.6 14.4l3-2.8 2 1.8-3 2.8z" fill="#1a1a1e"/><circle cx="22.6" cy="13.6" r="1.8" fill="#b8bcc4" stroke="#5a5e66" stroke-width="0.6"/></svg>
<div class="t" style="left:55.80px;top:497.69px;font-size:11.00px;line-height:15px;color:#1e2030;letter-spacing:-0.191px;">Seguimiento (Taller)</div>
<svg class="b" style="left:25px;top:521px" width="24" height="25" viewBox="0 -0.8 24 25"><path d="M8.6 1h9v2.2h-9z" fill="#f2c230" stroke="#b88a12" stroke-width="0.6"/><rect x="12.2" y="2.6" width="2" height="4" fill="#c8c8d8"/><path d="M1.4 12q0-4 4.4-4h8q8.6 0 8.6 7v3.6h-6V15q0-1.6-2.4-1.6H12v3.2q0 3-3.6 3H5.6q-4.2 0-4.2-4z" fill="#b4b6d0" stroke="#70728e" stroke-width="0.8"/><path d="M4 10.4q4-1.6 9-0.6" stroke="#f4f4fa" stroke-width="1.4" fill="none"/><circle cx="6.6" cy="15.4" r="2.8" fill="#dcdcea" stroke="#8a8ca4" stroke-width="0.6"/><path d="M19.4 19.6q2.2 2.6 0 4.2q-2.2-1.6 0-4.2z" fill="#3a7af0" stroke="#1a4ac0" stroke-width="0.5"/></svg>
<div class="t" style="left:55.80px;top:527.69px;font-size:11.00px;line-height:15px;color:#1e2030;letter-spacing:-0.081px;">Reportar fallas</div>
<svg class="b" style="left:25px;top:551px" width="24" height="25" viewBox="0 -0.8 24 25"><rect x="2" y="0.8" width="13" height="19" fill="#f0f0f2" stroke="#a8aab0" stroke-width="0.8"/><path d="M4 5h9M4 8.6h9M4 12.2h9" stroke="#8a8c94" stroke-width="2"/><path d="M9 22.6q0.4-6.6 4.4-9.6l2.6 3.2 2.6-3.2q4 3 4.4 9.6l-3.6 0.8-3.4-4-3.4 4z" fill="#e4b48a" stroke="#a8744a" stroke-width="0.7"/><path d="M8.6 21l4 2.6M23.4 21l-4 2.6" stroke="#2a2a32" stroke-width="2.4"/></svg>
<div class="t" style="left:55.80px;top:557.69px;font-size:11.00px;line-height:15px;color:#1e2030;letter-spacing:-0.310px;">Convenios</div>
<svg class="b" style="left:25px;top:581px" width="24" height="25" viewBox="0 -0.8 24 25"><rect x="5" y="0.8" width="18" height="22" rx="1" fill="#eaf2fe" stroke="#5a9af0" stroke-width="1.1"/><path d="M8 4h7M8 6.6h5" stroke="#7aaaf0" stroke-width="1"/><path d="M17 6.6h4M16.6 20.2h4.4" stroke="#e02a2a" stroke-width="1.3"/><rect x="8" y="9.6" width="13" height="8" fill="#fff" stroke="#6a9ae6" stroke-width="0.7"/><path d="M8 12.2h13M8 14.8h13M11.2 9.6v8M14.4 9.6v8M17.6 9.6v8" stroke="#6a9ae6" stroke-width="0.7"/><circle cx="5" cy="17.4" r="4.6" fill="#f8c430" stroke="#e09a0c" stroke-width="0.9"/><circle cx="5" cy="17.4" r="2.8" fill="none" stroke="#fff0b0" stroke-width="0.9"/><path d="M5 15.8v3.4" stroke="#c88a0a" stroke-width="1"/></svg>
<div class="t" style="left:55.80px;top:587.69px;font-size:11.00px;line-height:15px;color:#1e2030;letter-spacing:-0.021px;">Importar OS desde...</div>
<svg class="b" style="left:25px;top:611px" width="24" height="25" viewBox="0 -0.8 24 25"><rect x="1.2" y="4" width="21.6" height="18.6" fill="#f2f2f2" stroke="#9a9a9a" stroke-width="0.9"/><rect x="1.2" y="4" width="21.6" height="4.4" fill="#3f6ea8"/><rect x="1.2" y="19.6" width="21.6" height="3" fill="#c2c2c2"/><path d="M6.4 1.4v5M17.6 1.4v5" stroke="#8a8e96" stroke-width="1.6"/><path d="M4 11h16M4 13.6h16M4 16.2h16" stroke="#d0d0d0" stroke-width="0.9" stroke-dasharray="1.6 1.2"/><path d="M15.6 15.2h4.6v3l-1.6 1.4h-3z" fill="#fff" stroke="#8a8a8a" stroke-width="0.6"/></svg>
<div class="t" style="left:55.80px;top:617.69px;font-size:11.00px;line-height:15px;color:#1e2030;letter-spacing:-0.311px;">Calendario</div>
<svg class="b" style="left:25px;top:641px" width="24" height="25" viewBox="0 -0.8 24 25"><rect x="1" y="1.4" width="22" height="21.6" fill="#f6f6f6" stroke="#8a8a8a" stroke-width="1"/><rect x="1" y="1.4" width="22" height="3.4" fill="#2a2a2e"/><rect x="1.6" y="4.8" width="3.6" height="17.6" fill="#dcdcdc"/><defs><linearGradient id="tbg" x1="0" y1="0" x2="0" y2="1"><stop offset="0" stop-color="#2a9ad8"/><stop offset="1" stop-color="#0c6aa8"/></linearGradient></defs><rect x="10" y="4.8" width="5.6" height="17.6" fill="url(#tbg)"/><path d="M5.2 8.4h17.4M5.2 12h17.4M5.2 15.6h17.4M5.2 19.2h17.4" stroke="#c4ccd4" stroke-width="0.9"/><path d="M5.2 6.6h4.8M5.2 10.2h4.8M5.2 13.8h4.8M5.2 17.4h4.8M5.2 21h4.8M15.6 6.6h7M15.6 10.2h7M15.6 13.8h7M15.6 17.4h7M15.6 21h7" stroke="#fff" stroke-width="1.8"/></svg>
<div class="t" style="left:55.80px;top:647.69px;font-size:11.00px;line-height:15px;color:#1e2030;letter-spacing:-0.086px;">Historiales Manteni...</div>
<svg class="b" style="left:25px;top:671px" width="24" height="25" viewBox="0 -0.8 24 25"><rect x="1" y="1.4" width="22" height="21.6" fill="#f6f6f6" stroke="#8a8a8a" stroke-width="1"/><rect x="1" y="1.4" width="22" height="3.4" fill="#2a2a2e"/><rect x="1.6" y="4.8" width="3.6" height="17.6" fill="#dcdcdc"/><defs><linearGradient id="tbg2" x1="0" y1="0" x2="0" y2="1"><stop offset="0" stop-color="#2a9ad8"/><stop offset="1" stop-color="#0c6aa8"/></linearGradient></defs><rect x="10" y="4.8" width="5.6" height="17.6" fill="url(#tbg2)"/><path d="M5.2 8.4h17.4M5.2 12h17.4M5.2 15.6h17.4M5.2 19.2h17.4" stroke="#c4ccd4" stroke-width="0.9"/><path d="M5.2 6.6h4.8M5.2 10.2h4.8M5.2 13.8h4.8M5.2 17.4h4.8M5.2 21h4.8M15.6 6.6h7M15.6 10.2h7M15.6 13.8h7M15.6 17.4h7M15.6 21h7" stroke="#fff" stroke-width="1.8"/></svg>
<div class="t" style="left:55.80px;top:677.69px;font-size:11.00px;line-height:15px;color:#1e2030;letter-spacing:-0.341px;">Historiales Consumos</div>
<div class="b" style="left:174.00px;top:127.00px;width:1.00px;height:714.00px;background:#c8c8c8"></div>
<div class="b" style="left:179.10px;top:144.00px;width:7.70px;height:670.00px;background:#b9b9b9"></div>
<svg class="b" style="left:180px;top:134px" width="6" height="4" viewBox="-0.5 -0.5 6 4"><path d="M0 3h5L2.5 0z" fill="#8a8a8a"/></svg>
<svg class="b" style="left:180px;top:830px" width="6" height="4" viewBox="-0.5 -0.5 6 4"><path d="M0 0h5L2.5 3z" fill="#8a8a8a"/></svg>
<div class="t" style="left:106.00px;top:845.69px;font-size:11.00px;line-height:15px;color:#1a1a1a;letter-spacing:-0.206px;">Empresa: Empresa ACME, S.A. de C.V.</div>
<div class="t" style="left:459.00px;top:845.69px;font-size:11.00px;line-height:15px;color:#1a1a1a;letter-spacing:-0.137px;">Administrador: Admin()</div>
<div class="t" style="left:744.00px;top:845.69px;font-size:11.00px;line-height:15px;color:#1a1a1a;letter-spacing:-0.398px;">Access 2000</div>
<div class="t" style="left:940.00px;top:845.86px;font-size:10.50px;line-height:15px;color:#b0b0b0;letter-spacing:-1.198px;">CAPS</div>
<div class="t" style="left:974.00px;top:845.86px;font-size:10.50px;line-height:15px;color:#1a1a1a;letter-spacing:-0.956px;">NUM</div>
<div class="t" style="left:1006.00px;top:845.86px;font-size:10.50px;line-height:15px;color:#b0b0b0;letter-spacing:-1.337px;">SCRL</div>
<div class="t" style="left:1042.00px;top:845.86px;font-size:10.50px;line-height:15px;color:#b0b0b0;letter-spacing:-0.752px;">INS</div>
<div class="b" style="left:100.50px;top:843.00px;width:1.00px;height:18.00px;background:#c4c4c4"></div>
<div class="b" style="left:455.00px;top:843.00px;width:1.00px;height:18.00px;background:#c4c4c4"></div>
<div class="b" style="left:740.00px;top:843.00px;width:1.00px;height:18.00px;background:#c4c4c4"></div>
<div class="b" style="left:825.00px;top:843.00px;width:1.00px;height:18.00px;background:#c4c4c4"></div>
<div class="b" style="left:880.00px;top:843.00px;width:1.00px;height:18.00px;background:#c4c4c4"></div>
<div class="b" style="left:935.00px;top:843.00px;width:1.00px;height:18.00px;background:#c4c4c4"></div>
<div class="b" style="left:1064.00px;top:843.00px;width:1.00px;height:18.00px;background:#c4c4c4"></div>
<div class="b" style="left:0.00px;top:861.40px;width:1152.00px;height:3.00px;background:#2b2b2b"></div>
<div class="b" style="left:871.00px;top:861.40px;width:36.00px;height:3.00px;background:#5a5a5a"></div>
<div class="b" style="left:346.00px;top:154.00px;width:794.00px;height:1.00px;background:#c8c8c8"></div>
<div class="b" style="left:192.00px;top:127.00px;width:155.00px;height:28.00px;background:#fff;border-right:1px solid #bcbcbc;border-left:1px solid #b8b8b8"></div>
<div class="b" style="left:192.00px;top:127.00px;width:155.00px;height:2.00px;background:#0a9bf5"></div>
<div class="b" style="left:191.00px;top:154.00px;width:2.00px;height:1.00px;background:#b8b8b8"></div>
<div class="b" style="left:200.00px;top:146.00px;width:1.00px;height:1.00px;background:#d4d4d4"></div>
<div class="t" style="left:222.60px;top:134.14px;font-size:12.00px;line-height:17px;color:#118ce0;transform:scaleX(0.8974);transform-origin:0 50%;">Paquetes de Tareas</div>
<svg class="b" style="left:328px;top:137px" width="10" height="9" viewBox="0 -0.4 10 9"><path d="M0.6 0.6L8.8 7.4M8.8 0.6L0.6 7.4" stroke="#0a9bf5" stroke-width="1.4"/></svg>
<svg class="b" style="left:1128px;top:131px" width="9" height="9" viewBox="0 0 9 9"><path d="M1 1L8 8M8 1L1 8" stroke="#444" stroke-width="1.6"/></svg>
<div class="b" style="left:288.00px;top:161.00px;width:1.00px;height:19.00px;background:#b9b9b9"></div>
<div class="b" style="left:341.00px;top:161.00px;width:1.00px;height:19.00px;background:#b9b9b9"></div>
<div class="b" style="left:371.00px;top:161.00px;width:1.00px;height:19.00px;background:#b9b9b9"></div>
<div class="b" style="left:447.00px;top:161.00px;width:1.00px;height:19.00px;background:#b9b9b9"></div>
<div class="b" style="left:523.00px;top:161.00px;width:1.00px;height:19.00px;background:#b9b9b9"></div>
<div class="b" style="left:622.00px;top:161.00px;width:1.00px;height:19.00px;background:#b9b9b9"></div>
<svg class="b" style="left:196px;top:162px" width="16" height="17" viewBox="0 -0.5 16 17"><g opacity="1"><path d="M0.6 2.4v8.9a5.25 1.8 0 0 0 10.5 0v-8.9" fill="#fbe7c2" stroke="#d39a4e" stroke-width="0.9"/><path d="M0.6 5.8a5.25 1.8 0 0 0 10.5 0" fill="none" stroke="#e0b070" stroke-width="0.7"/><path d="M0.6 9a5.25 1.8 0 0 0 10.5 0" fill="none" stroke="#e0b070" stroke-width="0.7"/><ellipse cx="5.85" cy="2.4" rx="5.25" ry="1.8" fill="#fff3dc" stroke="#d39a4e" stroke-width="0.9"/></g><path d="M11.2 6.6v8.8M6.8 11h8.8" stroke="#3f8f1f" stroke-width="3.6"/><path d="M11.2 7.5v7M7.7 11h7" stroke="#8fd650" stroke-width="1.8"/></svg>
<svg class="b" style="left:220px;top:162px" width="16" height="17" viewBox="0 -0.5 16 17"><g opacity="1"><path d="M0.6 2.4v8.9a5.25 1.8 0 0 0 10.5 0v-8.9" fill="#fbe7c2" stroke="#d39a4e" stroke-width="0.9"/><path d="M0.6 5.8a5.25 1.8 0 0 0 10.5 0" fill="none" stroke="#e0b070" stroke-width="0.7"/><path d="M0.6 9a5.25 1.8 0 0 0 10.5 0" fill="none" stroke="#e0b070" stroke-width="0.7"/><ellipse cx="5.85" cy="2.4" rx="5.25" ry="1.8" fill="#fff3dc" stroke="#d39a4e" stroke-width="0.9"/></g><path d="M14.6 4.4l1.2 1.2L9 13.6l-2.6 1.4 1.2-2.8z" fill="#f0b44a" stroke="#a86a1a" stroke-width="0.7"/><path d="M6.4 15l1-0.6-0.6-0.6z" fill="#1a3a8a"/></svg>
<svg class="b" style="left:241px;top:162px" width="17" height="17" viewBox="-0.5 -0.5 17 17"><g opacity="1"><path d="M1.8 3v10a6 1.8 0 0 0 12 0v-10" fill="#fbe7c2" stroke="#d39a4e" stroke-width="0.9"/><path d="M1.8 6.4a6 1.8 0 0 0 12 0" fill="none" stroke="#e0b070" stroke-width="0.7"/><path d="M1.8 9.6a6 1.8 0 0 0 12 0" fill="none" stroke="#e0b070" stroke-width="0.7"/><ellipse cx="7.8" cy="3" rx="6" ry="1.8" fill="#fff3dc" stroke="#d39a4e" stroke-width="0.9"/></g></svg>
<svg class="b" style="left:266px;top:162px" width="16" height="17" viewBox="0 -0.5 16 17"><g opacity="1"><path d="M0.6 2.4v8.9a5.25 1.8 0 0 0 10.5 0v-8.9" fill="#fbe7c2" stroke="#d39a4e" stroke-width="0.9"/><path d="M0.6 5.8a5.25 1.8 0 0 0 10.5 0" fill="none" stroke="#e0b070" stroke-width="0.7"/><path d="M0.6 9a5.25 1.8 0 0 0 10.5 0" fill="none" stroke="#e0b070" stroke-width="0.7"/><ellipse cx="5.85" cy="2.4" rx="5.25" ry="1.8" fill="#fff3dc" stroke="#d39a4e" stroke-width="0.9"/></g><path d="M8 8.4l6.6 6.6M14.6 8.4L8 15" stroke="#d9483a" stroke-width="3.2" stroke-linecap="round"/><path d="M8.3 8.7l6 6M14.3 8.7l-6 6" stroke="#f59a8a" stroke-width="1.1" stroke-linecap="round"/></svg>
<svg class="b" style="left:295px;top:162px" width="16" height="17" viewBox="0 -0.5 16 17"><g fill="#d0d2d6" stroke="#70747c" stroke-width="0.8"><path d="M2.8 3.2h3.4l1 8.6a3 3 0 1 1-6.2 0z"/><path d="M9.8 3.2h3.4l1.8 8.6a3 3 0 1 1-6.2 0z"/><rect x="6.4" y="5" width="3.2" height="3.4"/></g><circle cx="4.1" cy="12" r="1.5" fill="#f4f4f6"/><circle cx="11.9" cy="12" r="1.5" fill="#f4f4f6"/></svg>
<svg class="b" style="left:318px;top:162px" width="17" height="17" viewBox="-0.5 -0.5 17 17"><path d="M1 3.4h14L9.6 9.2v5.4l-3.2 1V9.2z" fill="#f3b45a" stroke="#c9781c" stroke-width="0.8" stroke-linejoin="round"/><ellipse cx="8" cy="3.2" rx="7" ry="2.2" fill="#fbd9a0" stroke="#c9781c" stroke-width="0.8"/><ellipse cx="8" cy="3.3" rx="4.6" ry="1.1" fill="#d9913a"/></svg>
<svg class="b" style="left:348px;top:162px" width="16" height="17" viewBox="0 -0.5 16 17"><path d="M8.6 13.2A5.2 5.2 0 1 1 12.4 7.6" fill="none" stroke="#5ea31f" stroke-width="3.4"/><path d="M8.6 13.2A5.2 5.2 0 1 1 12.4 7.6" fill="none" stroke="#9ed45a" stroke-width="1.8"/><path d="M8.2 7.6h8l-4 6.2z" fill="#7fc03a" stroke="#5ea31f" stroke-width="0.7"/></svg>
<svg class="b" style="left:377px;top:162px" width="17" height="17" viewBox="-0.5 -0.5 17 17"><rect x="1" y="2" width="14" height="12" fill="#ececec" stroke="#a8a8a8"/><rect x="3" y="4" width="10" height="8" fill="#d2d2d2"/><circle cx="9" cy="7.6" r="2.4" fill="#b4b4b4"/><rect x="3" y="10" width="10" height="2" fill="#b8b8b8"/></svg>
<svg class="b" style="left:400px;top:162px" width="17" height="17" viewBox="-0.5 -0.5 17 17"><rect x="1.6" y="2.4" width="12.8" height="12.6" fill="#dedede" stroke="#a4a4a4"/><rect x="3.2" y="4.6" width="9.6" height="9" fill="#ececec"/><path d="M5.6 3.8a2.4 2.4 0 0 1 4.8 0l1 1.2H4.6z" fill="#b4b4b4" stroke="#8c8c8c" stroke-width="0.6"/></svg>
<svg class="b" style="left:424px;top:162px" width="16" height="17" viewBox="0 -0.5 16 17"><path d="M4.2 12.4L11.4 4.6a2 2 0 0 1 3 2.7l-8 8.2a3 3 0 0 1-4.4-4.1l7-7.3" fill="none" stroke="#9a9a9a" stroke-width="1.2"/></svg>
<svg class="b" style="left:455px;top:162px" width="16" height="17" viewBox="0 -0.5 16 17"><g fill="#fff" stroke="#3f8ae0" stroke-width="1.1"><rect x="0.8" y="1" width="9" height="2.6"/><rect x="4.4" y="5" width="10.6" height="2.6"/><rect x="4.4" y="9" width="10.6" height="2.6"/><rect x="4.4" y="13" width="10.6" height="2.4"/></g><path d="M2.4 3.6v10.6h2M2.4 6.3h2M2.4 10.3h2" fill="none" stroke="#3f8ae0" stroke-width="1"/></svg>
<svg class="b" style="left:477px;top:162px" width="17" height="17" viewBox="-0.5 -0.5 17 17"><g fill="#fff" stroke="#3f8ae0" stroke-width="1.1"><rect x="1.2" y="1.4" width="5" height="2.8"/><rect x="5.4" y="6.4" width="5.4" height="2.8"/><rect x="5.4" y="11" width="5.4" height="2.8"/></g><path d="M3 4.2v8.2h2.4M3 7.8h2.4M3 12.4v2.4" fill="none" stroke="#3f8ae0" stroke-width="1"/><path d="M12.8 0.6v5.6M10 3.4h5.6" stroke="#3f9a22" stroke-width="1.4"/></svg>
<svg class="b" style="left:500px;top:162px" width="17" height="17" viewBox="-0.5 -0.5 17 17"><g fill="#fff" stroke="#3f8ae0" stroke-width="1.1"><rect x="1.2" y="1.4" width="5" height="2.8"/><rect x="5.4" y="6.4" width="5.4" height="2.8"/><rect x="5.4" y="11" width="5.4" height="2.8"/></g><path d="M3 4.2v8.2h2.4M3 7.8h2.4M3 12.4v2.4" fill="none" stroke="#3f8ae0" stroke-width="1"/><rect x="9.6" y="1.4" width="6.2" height="2.4" fill="#e0503c"/></svg>
<svg class="b" style="left:529px;top:162px" width="17" height="17" viewBox="-0.5 -0.5 17 17"><rect x="0.8" y="3" width="14.4" height="10.4" fill="#f6f6f6" stroke="#b4b4b4" stroke-width="0.9"/><path d="M1 3.4l7 6 7-6M1 13l5.2-5M15 13L9.8 8" fill="none" stroke="#bcbcbc" stroke-width="0.9"/></svg>
<svg class="b" style="left:553px;top:162px" width="16" height="17" viewBox="0 -0.5 16 17"><rect x="0.8" y="0.8" width="14.4" height="14.4" fill="#f4faea" stroke="#46c846" stroke-width="1.6"/><rect x="2.6" y="2.6" width="10.8" height="10.8" fill="#f1f8e4" stroke="#9adf9a" stroke-width="0.8"/><path d="M4.4 4.6l7.2 7M11.6 4.6l-7.2 7" stroke="#36a036" stroke-width="2.3"/><path d="M4.6 4.4l3.2 3.2M11.4 4.4L8.6 7.2" stroke="#5cc05c" stroke-width="1"/></svg>
<svg class="b" style="left:575px;top:162px" width="16" height="17" viewBox="0 -0.5 16 17"><path d="M1.6 1h12.8v8.6L9.6 15H1.6z" fill="#fdfdfd" stroke="#2a2a2a" stroke-width="1.3" stroke-linejoin="round"/><path d="M14.4 9.6H9.6V15" fill="#d8d8d8" stroke="#2a2a2a" stroke-width="1"/><circle cx="6" cy="5.8" r="2.8" fill="#f0b030"/><path d="M6 5.8V3a2.8 2.8 0 0 1 2.8 2.8z" fill="#e04a3a"/><path d="M6 5.8h2.8a2.8 2.8 0 0 1-1.4 2.4z" fill="#5aaa3a"/></svg>
<svg class="b" style="left:599px;top:162px" width="16" height="17" viewBox="0 -0.5 16 17"><rect x="0.6" y="1" width="14.8" height="14" fill="#f7f7f7" stroke="#4a4a4a" stroke-width="1"/><rect x="0.6" y="1" width="14.8" height="3" fill="#3d64b4" stroke="#2a3c6a" stroke-width="0.6"/><text x="8" y="12.2" font-size="6.6" text-anchor="middle" fill="#555" font-family="Liberation Sans">TxT</text></svg>
<svg class="b" style="left:630px;top:162px" width="16" height="17" viewBox="0 -0.5 16 17"><rect x="1.4" y="0.6" width="11.2" height="13.2" fill="#fdfdff" stroke="#8c9cd2" stroke-width="1"/><circle cx="7" cy="7.6" r="3.7" fill="#d2eafb" stroke="#7f9cc8" stroke-width="1.1"/><circle cx="6.2" cy="6.6" r="1.6" fill="#fff" opacity="0.75"/><path d="M9.9 10.7l3.3 3.1" stroke="#b87a3a" stroke-width="2.6" stroke-linecap="round"/><path d="M9.9 10.7l3.3 3.1" stroke="#f0c090" stroke-width="1.4" stroke-linecap="round"/></svg>
<svg class="b" style="left:652px;top:162px" width="16" height="17" viewBox="0 -0.5 16 17"><rect x="3.2" y="0.6" width="7.6" height="6.4" fill="#f4f6fc" stroke="#a4b4dc" stroke-width="0.9"/><rect x="0.5" y="4.8" width="13" height="8" rx="1.2" fill="#eef1fa" stroke="#8c9ccc" stroke-width="0.9"/><rect x="2" y="6.2" width="10" height="2.4" fill="#6f7f9f"/><rect x="3.2" y="9.8" width="7.6" height="4.6" fill="#fbfcff" stroke="#a4b4dc" stroke-width="0.9"/><rect x="4.6" y="11" width="4.8" height="1.8" fill="#9accf2"/></svg>
<div class="b" style="left:191.00px;top:191.00px;width:949.00px;height:113.00px;border:1px solid #c8c8c8;background:#fff"></div>
<div class="b" style="left:191.00px;top:191.00px;width:932.00px;height:113.00px;border:2px solid #b8b8b8;border-bottom:1px solid #c8c8c8;background:#fff"></div>
<div class="b" style="left:193.00px;top:193.00px;width:928.00px;height:17.00px;background:#f6f6f6"></div>
<div class="b" style="left:193.00px;top:210.00px;width:10.00px;height:93.00px;background:#f6f6f6"></div>
<div class="b" style="left:204.00px;top:211.00px;width:917.00px;height:17.00px;background:#ddf2fd"></div>
<div class="b" style="left:203.00px;top:193.00px;width:1.00px;height:110.00px;background:#b7b7b7"></div>
<div class="b" style="left:662.00px;top:193.00px;width:1.00px;height:110.00px;background:#b7b7b7"></div>
<div class="b" style="left:996.00px;top:193.00px;width:1.00px;height:110.00px;background:#b7b7b7"></div>
<div class="b" style="left:193.00px;top:210.00px;width:928.00px;height:1.00px;background:#b7b7b7"></div>
<div class="b" style="left:193.00px;top:228.00px;width:928.00px;height:1.00px;background:#b7b7b7"></div>
<div class="b" style="left:193.00px;top:246.00px;width:928.00px;height:1.00px;background:#b7b7b7"></div>
<div class="b" style="left:193.00px;top:264.00px;width:928.00px;height:1.00px;background:#b7b7b7"></div>
<div class="b" style="left:193.00px;top:282.00px;width:928.00px;height:1.00px;background:#b7b7b7"></div>
<div class="b" style="left:193.00px;top:300.00px;width:928.00px;height:1.00px;background:#b7b7b7"></div>
<div class="t" style="left:405.50px;top:194.04px;font-size:12.00px;line-height:17px;color:#2e2e2e;transform:scaleX(0.8933);transform-origin:0 50%;">Descripción</div>
<div class="t" style="left:810.00px;top:194.04px;font-size:12.00px;line-height:17px;color:#2e2e2e;transform:scaleX(0.8995);transform-origin:0 50%;">Medidor</div>
<div class="t" style="left:1042.50px;top:194.04px;font-size:12.00px;line-height:17px;color:#2e2e2e;transform:scaleX(0.9072);transform-origin:0 50%;">Unidad</div>
<div class="t" style="left:206.20px;top:212.14px;font-size:12.00px;line-height:17px;color:#2e2e2e;transform:scaleX(0.8633);transform-origin:0 50%;">Automoviles Utilitarios</div>
<div class="t" style="left:665.50px;top:212.14px;font-size:12.00px;line-height:17px;color:#2e2e2e;transform:scaleX(0.8527);transform-origin:0 50%;">Odometro</div>
<div class="t" style="left:999.50px;top:212.14px;font-size:12.00px;line-height:17px;color:#2e2e2e;transform:scaleX(0.8055);transform-origin:0 50%;">Km</div>
<div class="t" style="left:206.20px;top:230.14px;font-size:12.00px;line-height:17px;color:#2e2e2e;transform:scaleX(0.8813);transform-origin:0 50%;">Cartilla de servicio para camioneta 5000 kg</div>
<div class="t" style="left:665.50px;top:230.14px;font-size:12.00px;line-height:17px;color:#2e2e2e;transform:scaleX(0.8527);transform-origin:0 50%;">Odometro</div>
<div class="t" style="left:999.50px;top:230.14px;font-size:12.00px;line-height:17px;color:#2e2e2e;transform:scaleX(0.8055);transform-origin:0 50%;">Km</div>
<div class="t" style="left:206.20px;top:248.14px;font-size:12.00px;line-height:17px;color:#2e2e2e;transform:scaleX(0.8863);transform-origin:0 50%;">Paquete camionetas cerradas</div>
<div class="t" style="left:665.50px;top:248.14px;font-size:12.00px;line-height:17px;color:#2e2e2e;transform:scaleX(0.8527);transform-origin:0 50%;">Odometro</div>
<div class="t" style="left:999.50px;top:248.14px;font-size:12.00px;line-height:17px;color:#2e2e2e;transform:scaleX(0.8055);transform-origin:0 50%;">Km</div>
<div class="t" style="left:206.20px;top:266.14px;font-size:12.00px;line-height:17px;color:#2e2e2e;transform:scaleX(0.8960);transform-origin:0 50%;">Paquete de autos</div>
<div class="t" style="left:665.50px;top:266.14px;font-size:12.00px;line-height:17px;color:#2e2e2e;transform:scaleX(0.8527);transform-origin:0 50%;">Odometro</div>
<div class="t" style="left:999.50px;top:266.14px;font-size:12.00px;line-height:17px;color:#2e2e2e;transform:scaleX(0.8055);transform-origin:0 50%;">Km</div>
<div class="t" style="left:206.20px;top:284.14px;font-size:12.00px;line-height:17px;color:#2e2e2e;transform:scaleX(0.8888);transform-origin:0 50%;">Paquete Manto. 3 y media ton</div>
<div class="t" style="left:665.50px;top:284.14px;font-size:12.00px;line-height:17px;color:#2e2e2e;transform:scaleX(0.8527);transform-origin:0 50%;">Odometro</div>
<div class="t" style="left:999.50px;top:284.14px;font-size:12.00px;line-height:17px;color:#2e2e2e;transform:scaleX(0.8055);transform-origin:0 50%;">Km</div>
<svg class="b" style="left:194px;top:198px" width="7" height="7" viewBox="0 0 8 8"><path d="M4 0v8M0 4h8M1.2 1.2l5.6 5.6M6.8 1.2L1.2 6.8" stroke="#505050" stroke-width="1"/></svg>
<svg class="b" style="left:195px;top:215px" width="6" height="9" viewBox="-0.8 -0.8 6 9"><path d="M0 0v7.4l4.4-3.7z" fill="#555"/></svg>
<svg class="b" style="left:1128px;top:199px" width="6" height="3" viewBox="0 0 6 3"><path d="M0 3h6L3 0z" fill="#858585"/></svg>
<div class="b" style="left:1127.00px;top:209.20px;width:8.00px;height:25.60px;background:#b8b8b8"></div>
<svg class="b" style="left:1128px;top:293px" width="6" height="3" viewBox="0 0 6 3"><path d="M0 0h6L3 3z" fill="#858585"/></svg>
<div class="b" style="left:657.50px;top:308.50px;width:1.00px;height:1.00px;background:#777"></div>
<div class="b" style="left:659.50px;top:308.50px;width:1.00px;height:1.00px;background:#777"></div>
<div class="b" style="left:661.50px;top:308.50px;width:1.00px;height:1.00px;background:#777"></div>
<div class="b" style="left:663.50px;top:308.50px;width:1.00px;height:1.00px;background:#777"></div>
<div class="b" style="left:665.50px;top:308.50px;width:1.00px;height:1.00px;background:#777"></div>
<div class="b" style="left:667.50px;top:308.50px;width:1.00px;height:1.00px;background:#777"></div>
<div class="b" style="left:669.50px;top:308.50px;width:1.00px;height:1.00px;background:#777"></div>
<div class="b" style="left:671.50px;top:308.50px;width:1.00px;height:1.00px;background:#777"></div>
<div class="b" style="left:265.00px;top:322.00px;width:1.00px;height:20.00px;background:#b9b9b9"></div>
<div class="b" style="left:318.00px;top:322.00px;width:1.00px;height:20.00px;background:#b9b9b9"></div>
<div class="b" style="left:348.00px;top:322.00px;width:1.00px;height:20.00px;background:#b9b9b9"></div>
<svg class="b" style="left:195px;top:325px" width="17" height="16" viewBox="-0.5 0 17 16"><path d="M0.5 4.7h5.6v4h-5.6" fill="#d8f6d8" stroke="#32c832" stroke-width="1"/><path d="M6.1 6.7h3" stroke="#32c832" stroke-width="1"/><path d="M8.3 4.4l3 2.3-3 2.3z" fill="#2e8b2e"/><path d="M16.3 0.6h-5v4.2h5M16.3 8.6h-5v4.2h5" fill="none" stroke="#32c832" stroke-width="1.1"/></svg>
<svg class="b" style="left:218px;top:325px" width="17" height="16" viewBox="-0.6 0 17 16"><g fill="#d6d6d6" stroke="#b0b0b0" stroke-width="0.6"><rect x="0.6" y="0.8" width="8.6" height="3.4"/><rect x="0.6" y="4.8" width="8.6" height="3.4"/><rect x="0.6" y="8.8" width="8.6" height="3.6"/></g><path d="M15 0.2l1 1-6 7.6-2 1 0.6-2z" fill="#bcbcbc" stroke="#8a8a8a" stroke-width="0.6"/><circle cx="15.4" cy="0.8" r="1" fill="#a0a0a0"/></svg>
<svg class="b" style="left:241px;top:325px" width="17" height="16" viewBox="-0.6 0 17 16"><rect x="0.5" y="4.7" width="7" height="4" fill="#d8f6d8"/><path d="M0.5 0.6h7.2v12.2H0.5M0.5 4.7h7.2M0.5 8.7h7.2" fill="none" stroke="#32c832" stroke-width="1.1"/><path d="M7.7 6.7h6" stroke="#32c832" stroke-width="1"/><path d="M12.6 4.2l3.4 2.5-3.4 2.5z" fill="#2e8b2e"/></svg>
<svg class="b" style="left:272px;top:325px" width="17" height="16" viewBox="-0.6 0 17 16"><defs><linearGradient id="gc" x1="0" y1="0" x2="1" y2="1"><stop offset="0" stop-color="#e6e6e6"/><stop offset="1" stop-color="#cfcfcf"/></linearGradient></defs><rect x="0.6" y="1.6" width="12.4" height="12.2" fill="url(#gc)" stroke="#b4b4b4" stroke-width="0.9"/><path d="M4.4 2h6.4l-0.6 2.6H5z" fill="#c0c0c0"/><circle cx="7.6" cy="2.2" r="2.2" fill="#d0d0d0" stroke="#9c9c9c" stroke-width="0.8"/></svg>
<svg class="b" style="left:295px;top:325px" width="17" height="16" viewBox="-0.8 0 17 16"><defs><linearGradient id="gc3" x1="0" y1="0" x2="1" y2="1"><stop offset="0" stop-color="#e6e6e6"/><stop offset="1" stop-color="#cfcfcf"/></linearGradient></defs><rect x="0.6" y="1.6" width="12.4" height="12.2" fill="url(#gc3)" stroke="#b4b4b4" stroke-width="0.9"/><path d="M4.4 2h6.4l-0.6 2.6H5z" fill="#c0c0c0"/><circle cx="7.6" cy="2.2" r="2.2" fill="#d0d0d0" stroke="#9c9c9c" stroke-width="0.8"/></svg>
<svg class="b" style="left:325px;top:324px" width="16" height="16" viewBox="0 0 16 16"><rect x="0.8" y="0.8" width="14.4" height="14.4" fill="#f4faea" stroke="#46c846" stroke-width="1.6"/><rect x="2.6" y="2.6" width="10.8" height="10.8" fill="#f1f8e4" stroke="#9adf9a" stroke-width="0.8"/><path d="M4.4 4.6l7.2 7M11.6 4.6l-7.2 7" stroke="#36a036" stroke-width="2.3"/><path d="M4.6 4.4l3.2 3.2M11.4 4.4L8.6 7.2" stroke="#5cc05c" stroke-width="1"/></svg>
<svg class="b" style="left:356px;top:324px" width="16" height="16" viewBox="0 0 16 16"><rect x="1.4" y="0.6" width="11.2" height="13.2" fill="#fdfdff" stroke="#8c9cd2" stroke-width="1"/><circle cx="7" cy="7.6" r="3.7" fill="#d2eafb" stroke="#7f9cc8" stroke-width="1.1"/><circle cx="6.2" cy="6.6" r="1.6" fill="#fff" opacity="0.75"/><path d="M9.9 10.7l3.3 3.1" stroke="#b87a3a" stroke-width="2.6" stroke-linecap="round"/><path d="M9.9 10.7l3.3 3.1" stroke="#f0c090" stroke-width="1.4" stroke-linecap="round"/></svg>
<svg class="b" style="left:379px;top:324px" width="16" height="17" viewBox="0 -0.2 16 17"><rect x="3.2" y="0.6" width="7.6" height="6.4" fill="#f4f6fc" stroke="#a4b4dc" stroke-width="0.9"/><rect x="0.5" y="4.8" width="13" height="8" rx="1.2" fill="#eef1fa" stroke="#8c9ccc" stroke-width="0.9"/><rect x="2" y="6.2" width="10" height="2.4" fill="#6f7f9f"/><rect x="3.2" y="9.8" width="7.6" height="4.6" fill="#fbfcff" stroke="#a4b4dc" stroke-width="0.9"/><rect x="4.6" y="11" width="4.8" height="1.8" fill="#9accf2"/></svg>
<div class="t" style="left:403.00px;top:323.64px;font-size:12.00px;line-height:17px;color:#6e6e6e;transform:scaleX(0.9855);transform-origin:0 50%;font-weight:bold;">Automoviles Utilitarios</div>
<div class="b" style="left:191.00px;top:376.00px;width:949.00px;height:436.00px;border:1px solid #bcbcbc;background:#fff"></div>
<div class="b" style="left:193.00px;top:352.00px;width:138.00px;height:24.30px;background:#f5f5f5;border:1px solid #b2b2b2;border-bottom:none"></div>
<div class="t" style="left:203.30px;top:356.94px;font-size:12.00px;line-height:17px;color:#3c3c3c;transform:scaleX(0.8831);transform-origin:0 50%;">Tareas de Mantenimiento</div>
<div class="b" style="left:432.00px;top:352.00px;width:175.00px;height:24.30px;background:#f5f5f5;border:1px solid #b2b2b2;border-bottom:none"></div>
<div class="t" style="left:442.00px;top:356.94px;font-size:12.00px;line-height:17px;color:#3c3c3c;transform:scaleX(0.8848);transform-origin:0 50%;">Tareas de revisión tipo CheckList</div>
<div class="b" style="left:606.00px;top:352.00px;width:129.00px;height:24.30px;background:#f5f5f5;border:1px solid #b2b2b2;border-bottom:none"></div>
<div class="t" style="left:616.80px;top:356.94px;font-size:12.00px;line-height:17px;color:#3c3c3c;transform:scaleX(0.8738);transform-origin:0 50%;">Repuestos compatibles</div>
<div class="b" style="left:330.00px;top:350.00px;width:103.00px;height:27.00px;background:#fff;border-left:1px solid #b2b2b2;border-right:1px solid #b2b2b2"></div>
<div class="b" style="left:330.00px;top:350.00px;width:103.00px;height:2.00px;background:#0a9bf5"></div>
<div class="t" style="left:340.40px;top:356.94px;font-size:12.00px;line-height:17px;color:#118ce0;transform:scaleX(0.8643);transform-origin:0 50%;">Fallas Correctivas</div>
<div class="b" style="left:193.00px;top:378.00px;width:481.00px;height:432.00px;border:1px solid #c8c8c8;border-left:2px solid #b8b8b8;border-top:2px solid #b8b8b8;background:#fff"></div>
<div class="b" style="left:195.00px;top:380.00px;width:477.00px;height:17.00px;background:#f6f6f6"></div>
<div class="b" style="left:195.00px;top:397.00px;width:10.00px;height:306.00px;background:#f6f6f6"></div>
<div class="b" style="left:205.00px;top:380.00px;width:1.00px;height:324.00px;background:#b7b7b7"></div>
<div class="b" style="left:319.00px;top:380.00px;width:1.00px;height:324.00px;background:#b7b7b7"></div>
<div class="b" style="left:672.00px;top:380.00px;width:1.00px;height:324.00px;background:#b7b7b7"></div>
<div class="b" style="left:195.00px;top:397.00px;width:478.00px;height:1.00px;background:#b7b7b7"></div>
<div class="b" style="left:195.00px;top:415.00px;width:478.00px;height:1.00px;background:#b7b7b7"></div>
<div class="b" style="left:195.00px;top:433.00px;width:478.00px;height:1.00px;background:#b7b7b7"></div>
<div class="b" style="left:195.00px;top:451.00px;width:478.00px;height:1.00px;background:#b7b7b7"></div>
<div class="b" style="left:195.00px;top:469.00px;width:478.00px;height:1.00px;background:#b7b7b7"></div>
<div class="b" style="left:195.00px;top:487.00px;width:478.00px;height:1.00px;background:#b7b7b7"></div>
<div class="b" style="left:195.00px;top:505.00px;width:478.00px;height:1.00px;background:#b7b7b7"></div>
<div class="b" style="left:195.00px;top:523.00px;width:478.00px;height:1.00px;background:#b7b7b7"></div>
<div class="b" style="left:195.00px;top:541.00px;width:478.00px;height:1.00px;background:#b7b7b7"></div>
<div class="b" style="left:195.00px;top:559.00px;width:478.00px;height:1.00px;background:#b7b7b7"></div>
<div class="b" style="left:195.00px;top:577.00px;width:478.00px;height:1.00px;background:#b7b7b7"></div>
<div class="b" style="left:195.00px;top:595.00px;width:478.00px;height:1.00px;background:#b7b7b7"></div>
<div class="b" style="left:195.00px;top:613.00px;width:478.00px;height:1.00px;background:#b7b7b7"></div>
<div class="b" style="left:195.00px;top:631.00px;width:478.00px;height:1.00px;background:#b7b7b7"></div>
<div class="b" style="left:195.00px;top:649.00px;width:478.00px;height:1.00px;background:#b7b7b7"></div>
<div class="b" style="left:195.00px;top:667.00px;width:478.00px;height:1.00px;background:#b7b7b7"></div>
<div class="b" style="left:195.00px;top:685.00px;width:478.00px;height:1.00px;background:#b7b7b7"></div>
<div class="b" style="left:195.00px;top:703.00px;width:478.00px;height:1.00px;background:#b7b7b7"></div>
<div class="b" style="left:673.00px;top:378.00px;width:1.00px;height:20.00px;background:#b8b8b8"></div>
<div class="t" style="left:208.80px;top:381.14px;font-size:12.00px;line-height:17px;color:#2e2e2e;transform:scaleX(0.8703);transform-origin:0 50%;">Clave</div>
<div class="t" style="left:322.40px;top:381.14px;font-size:12.00px;line-height:17px;color:#2e2e2e;transform:scaleX(0.8304);transform-origin:0 50%;">Falla</div>
<svg class="b" style="left:304px;top:386px" width="10" height="5" viewBox="0 -0.5 10 5"><path d="M0 4.4h9.2L4.6 0z" fill="#747474"/></svg>
<svg class="b" style="left:196px;top:385px" width="7" height="7" viewBox="0 0 8 8"><path d="M4 0v8M0 4h8M1.2 1.2l5.6 5.6M6.8 1.2L1.2 6.8" stroke="#505050" stroke-width="1"/></svg>
<div class="b" style="left:206.00px;top:398.00px;width:466.00px;height:17.00px;background:#04a0f8"></div>
<div class="b" style="left:206.00px;top:398.00px;width:113.00px;height:17.00px;border:1px dotted #e8641e"></div>
<div class="b" style="left:320.00px;top:398.00px;width:352.00px;height:17.00px;border:1px dotted #e8641e"></div>
<svg class="b" style="left:197px;top:403px" width="6" height="8" viewBox="-0.8 0 6 8"><path d="M0 0v7.4l4.4-3.7z" fill="#555"/></svg>
<div class="t" style="left:208.80px;top:398.94px;font-size:12.00px;line-height:17px;color:#fff;transform:scaleX(0.7991);transform-origin:0 50%;">001</div>
<div class="t" style="left:322.40px;top:398.94px;font-size:12.00px;line-height:17px;color:#fff;transform:scaleX(0.8429);transform-origin:0 50%;">Limpiadores</div>
<div class="t" style="left:208.80px;top:416.94px;font-size:12.00px;line-height:17px;color:#2e2e2e;transform:scaleX(0.7991);transform-origin:0 50%;">002</div>
<div class="t" style="left:322.40px;top:416.94px;font-size:12.00px;line-height:17px;color:#2e2e2e;transform:scaleX(0.8730);transform-origin:0 50%;">Sistema de escape</div>
<div class="t" style="left:208.80px;top:434.94px;font-size:12.00px;line-height:17px;color:#2e2e2e;transform:scaleX(0.7991);transform-origin:0 50%;">003</div>
<div class="t" style="left:322.40px;top:434.94px;font-size:12.00px;line-height:17px;color:#2e2e2e;transform:scaleX(0.8503);transform-origin:0 50%;">Baleros</div>
<div class="t" style="left:208.80px;top:452.94px;font-size:12.00px;line-height:17px;color:#2e2e2e;transform:scaleX(0.7991);transform-origin:0 50%;">004</div>
<div class="t" style="left:322.40px;top:452.94px;font-size:12.00px;line-height:17px;color:#2e2e2e;transform:scaleX(0.8747);transform-origin:0 50%;">Bandas</div>
<div class="t" style="left:208.80px;top:470.94px;font-size:12.00px;line-height:17px;color:#2e2e2e;transform:scaleX(0.7991);transform-origin:0 50%;">005</div>
<div class="t" style="left:322.40px;top:470.94px;font-size:12.00px;line-height:17px;color:#2e2e2e;transform:scaleX(0.8663);transform-origin:0 50%;">Sistema de enfriamiento</div>
<div class="t" style="left:208.80px;top:488.94px;font-size:12.00px;line-height:17px;color:#2e2e2e;transform:scaleX(0.7991);transform-origin:0 50%;">006</div>
<div class="t" style="left:322.40px;top:488.94px;font-size:12.00px;line-height:17px;color:#2e2e2e;transform:scaleX(0.8835);transform-origin:0 50%;">Motor</div>
<div class="t" style="left:208.80px;top:506.94px;font-size:12.00px;line-height:17px;color:#2e2e2e;transform:scaleX(0.7991);transform-origin:0 50%;">007</div>
<div class="t" style="left:322.40px;top:506.94px;font-size:12.00px;line-height:17px;color:#2e2e2e;transform:scaleX(0.8695);transform-origin:0 50%;">Sistema Eléctrico</div>
<div class="t" style="left:208.80px;top:524.94px;font-size:12.00px;line-height:17px;color:#2e2e2e;transform:scaleX(0.7991);transform-origin:0 50%;">008</div>
<div class="t" style="left:322.40px;top:524.94px;font-size:12.00px;line-height:17px;color:#2e2e2e;transform:scaleX(0.8648);transform-origin:0 50%;">Sistema de Frenos</div>
<div class="t" style="left:208.80px;top:542.94px;font-size:12.00px;line-height:17px;color:#2e2e2e;transform:scaleX(0.7991);transform-origin:0 50%;">009</div>
<div class="t" style="left:322.40px;top:542.94px;font-size:12.00px;line-height:17px;color:#2e2e2e;transform:scaleX(0.8901);transform-origin:0 50%;">Alineación y Balanceo</div>
<div class="t" style="left:208.80px;top:560.94px;font-size:12.00px;line-height:17px;color:#2e2e2e;transform:scaleX(0.7991);transform-origin:0 50%;">010</div>
<div class="t" style="left:322.40px;top:560.94px;font-size:12.00px;line-height:17px;color:#2e2e2e;transform:scaleX(0.8706);transform-origin:0 50%;">Suspensión</div>
<div class="t" style="left:208.80px;top:578.94px;font-size:12.00px;line-height:17px;color:#2e2e2e;transform:scaleX(0.8363);transform-origin:0 50%;">011</div>
<div class="t" style="left:322.40px;top:578.94px;font-size:12.00px;line-height:17px;color:#2e2e2e;transform:scaleX(0.8829);transform-origin:0 50%;">Caja de Velocidades</div>
<div class="t" style="left:208.80px;top:596.94px;font-size:12.00px;line-height:17px;color:#2e2e2e;transform:scaleX(0.7991);transform-origin:0 50%;">012</div>
<div class="t" style="left:322.40px;top:596.94px;font-size:12.00px;line-height:17px;color:#2e2e2e;transform:scaleX(0.8915);transform-origin:0 50%;">Aire Acondicionado</div>
<div class="t" style="left:208.80px;top:614.94px;font-size:12.00px;line-height:17px;color:#2e2e2e;transform:scaleX(0.7991);transform-origin:0 50%;">013</div>
<div class="t" style="left:322.40px;top:614.94px;font-size:12.00px;line-height:17px;color:#2e2e2e;transform:scaleX(0.8762);transform-origin:0 50%;">Sistema de dirección</div>
<div class="t" style="left:208.80px;top:632.94px;font-size:12.00px;line-height:17px;color:#2e2e2e;transform:scaleX(0.7991);transform-origin:0 50%;">014</div>
<div class="t" style="left:322.40px;top:632.94px;font-size:12.00px;line-height:17px;color:#2e2e2e;transform:scaleX(0.8896);transform-origin:0 50%;">Lubricación</div>
<div class="t" style="left:208.80px;top:650.94px;font-size:12.00px;line-height:17px;color:#2e2e2e;transform:scaleX(0.7991);transform-origin:0 50%;">015</div>
<div class="t" style="left:322.40px;top:650.94px;font-size:12.00px;line-height:17px;color:#2e2e2e;transform:scaleX(0.8683);transform-origin:0 50%;">Llantas</div>
<div class="t" style="left:208.80px;top:668.94px;font-size:12.00px;line-height:17px;color:#2e2e2e;transform:scaleX(0.7991);transform-origin:0 50%;">016</div>
<div class="t" style="left:322.40px;top:668.94px;font-size:12.00px;line-height:17px;color:#2e2e2e;transform:scaleX(0.8749);transform-origin:0 50%;">Diferencial</div>
<div class="t" style="left:208.80px;top:686.94px;font-size:12.00px;line-height:17px;color:#2e2e2e;transform:scaleX(0.7991);transform-origin:0 50%;">017</div>
<div class="t" style="left:322.40px;top:686.94px;font-size:12.00px;line-height:17px;color:#2e2e2e;transform:scaleX(0.8643);transform-origin:0 50%;">Transmisión</div>
<div class="t" style="left:692.00px;top:409.64px;font-size:12.00px;line-height:17px;color:#2e2e2e;transform:scaleX(0.8822);transform-origin:0 50%;">En esta opción podemos seleccionar del</div>
<div class="t" style="left:692.00px;top:422.64px;font-size:12.00px;line-height:17px;color:#2e2e2e;transform:scaleX(0.8714);transform-origin:0 50%;">catálogo de fallas las que utilizara todos los</div>
<div class="t" style="left:692.00px;top:435.64px;font-size:12.00px;line-height:17px;color:#2e2e2e;transform:scaleX(0.8870);transform-origin:0 50%;">vehículos asociados al mismo paquete esto</div>
<div class="t" style="left:692.00px;top:448.64px;font-size:12.00px;line-height:17px;color:#2e2e2e;transform:scaleX(0.8716);transform-origin:0 50%;">dará un filtrado al momento de crear un reporte</div>
<div class="t" style="left:692.00px;top:461.64px;font-size:12.00px;line-height:17px;color:#2e2e2e;transform:scaleX(0.8873);transform-origin:0 50%;">de fallas. Si no se selecciona ninguna falla el</div>
<div class="t" style="left:692.00px;top:474.64px;font-size:12.00px;line-height:17px;color:#2e2e2e;transform:scaleX(0.8696);transform-origin:0 50%;">sistema presentara todas las que existan en</div>
<div class="t" style="left:692.00px;top:487.64px;font-size:12.00px;line-height:17px;color:#2e2e2e;transform:scaleX(0.8704);transform-origin:0 50%;">catalogo de fallas.</div>
<div class="t" style="left:206.40px;top:819.99px;font-size:11.00px;line-height:15px;color:#1a1a1a;letter-spacing:-0.026px;">Total 15 Registros</div>
</body></html>
